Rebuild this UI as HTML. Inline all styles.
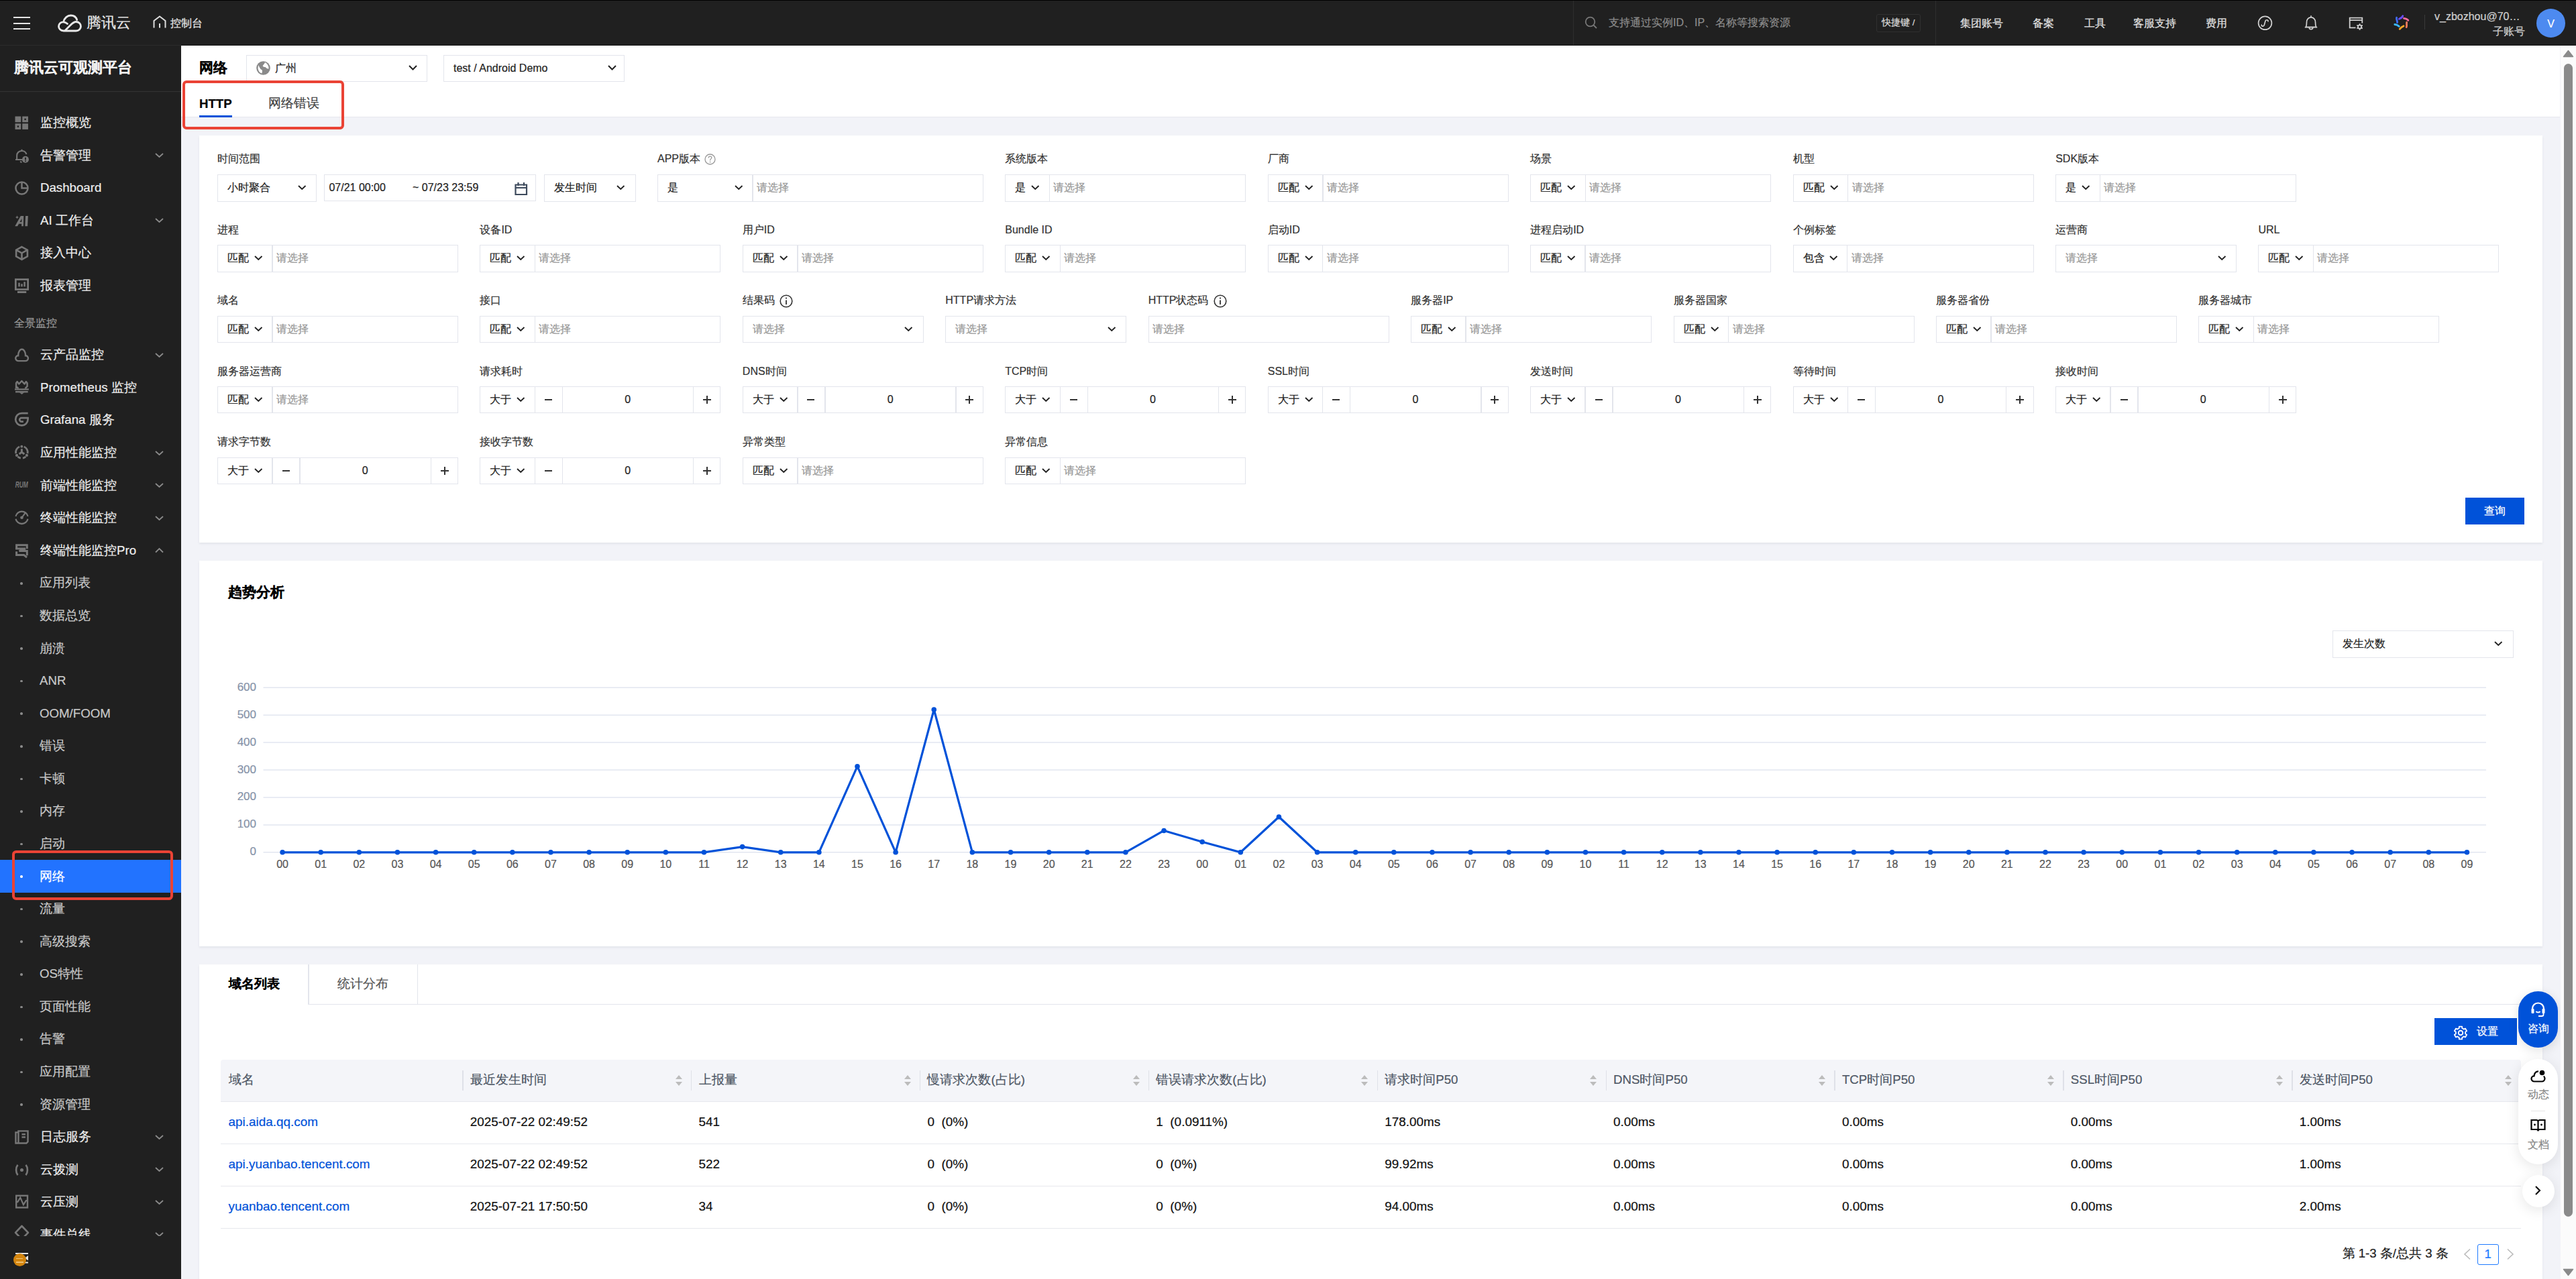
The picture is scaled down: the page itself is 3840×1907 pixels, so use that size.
<!DOCTYPE html><html><head><meta charset="utf-8"><style>
*{box-sizing:border-box;margin:0;padding:0}
html,body{width:3840px;height:1907px;overflow:hidden;background:#f2f3f8;font-family:'Liberation Sans', sans-serif;}
.a{position:absolute}
.t{position:absolute;white-space:nowrap;line-height:1;-webkit-text-stroke:0.2px currentColor}
.box{position:absolute;border:1.33px solid #e3e5ec;background:#fff}
.vl{position:absolute;width:1.33px;background:#e3e5ec}
svg{overflow:visible}
</style></head><body>

<div class="a" style="left:0;top:0;width:3840px;height:68px;background:#202020"></div>
<div class="a" style="left:270px;top:67px;width:3570px;height:1px;background:#181818"></div>
<div class="a" style="left:0;top:0;width:3840px;height:1px;background:#000"></div>
<div class="a" style="left:0;top:67px;width:270px;height:1px;background:#2b2b2b"></div>
<div class="a" style="left:20px;top:25.3px;width:25px;height:2.2px;background:#e6e6e6"></div>
<div class="a" style="left:20px;top:33.5px;width:25px;height:2.2px;background:#e6e6e6"></div>
<div class="a" style="left:20px;top:41.6px;width:25px;height:2.2px;background:#e6e6e6"></div>
<svg class="a" style="left:86px;top:21px" width="36" height="27" viewBox="0 0 36 27"><path d="M9 25 C4 25 1.5 21.5 1.5 18.3 C1.5 14.5 4.8 11.6 8.5 11.8 C10 5.8 14.5 2 19.5 2 C24 2 27.5 4.8 28.7 8.5 M8.5 11.8 C11 12 13 13 14.5 14.5 M9 25 L27.5 25 C31.5 25 34.5 22 34.5 18.3 C34.5 14.5 31.5 11.5 27.5 11.5 C23.5 11.5 21.5 14 18 17.5 L10.5 25" fill="none" stroke="#e8e8e8" stroke-width="2.8" stroke-linejoin="round" stroke-linecap="round"/></svg>
<div class="t" style="left:129px;top:24px;font-size:21.5px;color:#e8e8e8">腾讯云</div>
<svg class="a" style="left:228px;top:23px" width="20" height="20" viewBox="0 0 20 20"><path d="M1.5 18.5 V8 L10 1.5 L18.5 8 V18.5 M10 12 V18.5" fill="none" stroke="#ddd" stroke-width="2"/></svg>
<div class="t" style="left:254px;top:27px;font-size:16px;color:#e8e8e8">控制台</div>
<div class="a" style="left:2345px;top:1px;width:1px;height:66px;background:#2e2e2e"></div>
<div class="a" style="left:2885px;top:1px;width:1px;height:66px;background:#2e2e2e"></div>
<svg class="a" style="left:2362px;top:24px" width="20" height="20" viewBox="0 0 20 20"><circle cx="8.5" cy="8.5" r="6.8" fill="none" stroke="#777" stroke-width="1.8"/><path d="M13.5 13.5 L18 18" stroke="#777" stroke-width="1.8"/></svg>
<div class="t" style="left:2398px;top:26px;font-size:16px;color:#8c8c8c">支持通过实例ID、IP、名称等搜索资源</div>
<div class="a" style="left:2797px;top:21px;width:66px;height:27px;border:1px solid #303030;border-radius:3px"></div>
<div class="t" style="left:2805px;top:27px;font-size:13.5px;color:#ddd">快捷键 /</div>
<div class="t" style="left:2922px;top:27px;font-size:16px;color:#e0e0e0">集团账号</div>
<div class="t" style="left:3030px;top:27px;font-size:16px;color:#e0e0e0">备案</div>
<div class="t" style="left:3107px;top:27px;font-size:16px;color:#e0e0e0">工具</div>
<div class="t" style="left:3180px;top:27px;font-size:16px;color:#e0e0e0">客服支持</div>
<div class="t" style="left:3288px;top:27px;font-size:16px;color:#e0e0e0">费用</div>
<svg class="a" style="left:3365px;top:22.5px" width="23" height="23" viewBox="0 0 23 23"><circle cx="11.5" cy="11.3" r="9.9" fill="none" stroke="#d0d0d0" stroke-width="1.7"/><path d="M6.3 14.2 C6.3 16.8 9.6 16.8 10.3 14.3 L11.9 8.6 C12.6 6 16 6.2 16 8.7" fill="none" stroke="#d0d0d0" stroke-width="1.7" stroke-linecap="round"/></svg>
<svg class="a" style="left:3434px;top:22px" width="22" height="24" viewBox="0 0 22 24"><path d="M11 1.2 V3.6 M3.5 18.3 C4.2 16.5 4.5 14.5 4.5 11 C4.5 6.8 7.3 3.8 11 3.8 C14.7 3.8 17.5 6.8 17.5 11 C17.5 14.5 17.8 16.5 18.5 18.3 Z M1.8 18.6 H20.2 M8.3 19.5 C8.5 22.3 13.5 22.3 13.7 19.5" fill="none" stroke="#d0d0d0" stroke-width="1.7" stroke-linejoin="round"/></svg>
<svg class="a" style="left:3501px;top:24.5px" width="23" height="22" viewBox="0 0 23 22"><path d="M10.5 16.3 H1.7 V1.7 H20.3 V9.5 M1.7 5.2 H20.3" fill="none" stroke="#d0d0d0" stroke-width="1.8"/><circle cx="16.6" cy="15" r="2.6" fill="none" stroke="#d0d0d0" stroke-width="1.8"/><path d="M16.6 10.2 V12 M16.6 18 V19.8 M12.4 12.6 L14 13.5 M19.2 16.5 L20.8 17.4 M12.4 17.4 L14 16.5 M19.2 13.5 L20.8 12.6" stroke="#d0d0d0" stroke-width="1.8"/></svg>
<svg class="a" style="left:3566px;top:20px" width="26" height="26" viewBox="0 0 26 26">
<path d="M6.6 6.3 C5.8 8.5 7.8 11 7.6 13.5" fill="none" stroke="#3f6cff" stroke-width="2.8" stroke-linecap="round"/>
<path d="M10.3 8.3 C12.5 7.5 14.8 6 15.8 3.8" fill="none" stroke="#6a4cff" stroke-width="2.8" stroke-linecap="round"/>
<path d="M17.5 7.3 C19.8 7.5 22.5 8.3 23.8 10.3" fill="none" stroke="#ff6ca0" stroke-width="2.8" stroke-linecap="round"/>
<path d="M21.7 13.3 C21 15.5 22.3 18.5 21.2 20.5" fill="none" stroke="#ff7d5e" stroke-width="2.8" stroke-linecap="round"/>
<path d="M17 18.8 C14.8 19.5 12.5 21.5 11.3 23.3" fill="none" stroke="#ffa726" stroke-width="2.8" stroke-linecap="round"/>
<path d="M3.8 16.5 C6 16.5 8.5 17.8 10.3 19.3" fill="none" stroke="#3cb9ff" stroke-width="2.8" stroke-linecap="round"/>
</svg>
<div class="a" style="left:3614px;top:22px;width:1px;height:22px;background:#3a3a3a"></div>
<div class="t" style="left:3629px;top:16.5px;font-size:16px;color:#d0d0d0">v_zbozhou@70…</div>
<div class="t" style="left:3716px;top:38.5px;font-size:16px;color:#d0d0d0">子账号</div>
<div class="a" style="left:3781px;top:13px;width:43px;height:43px;border-radius:50%;background:#4d8af0"></div>
<div class="t" style="left:3781px;top:27.5px;width:43px;text-align:center;font-size:16px;color:#fff">V</div>
<div class="a" style="left:0;top:68px;width:270px;height:1839px;background:#202020"></div>
<div class="t" style="left:21px;top:91px;font-size:21.5px;font-weight:bold;color:#f0f0f0">腾讯云可观测平台</div>
<div class="a" style="left:0;top:136px;width:270px;height:1px;background:#333"></div>
<svg class="a" style="left:22px;top:173.00px" width="21" height="21" viewBox="0 0 20 20"><rect x="0.5" y="0.5" width="8.3" height="8.3" fill="#777777"/><rect x="10.7" y="0.5" width="8.3" height="8.3" fill="#777777"/><rect x="0.5" y="10.7" width="8.3" height="8.3" fill="#777777"/><rect x="10.7" y="10.7" width="8.3" height="8.3" fill="#777777"/><rect x="13.7" y="3.5" width="2.3" height="2.3" fill="#202020"/><rect x="3.5" y="13.7" width="2.3" height="2.3" fill="#202020"/></svg>
<div class="t" style="left:60px;top:174.00px;font-size:18.67px;color:#ececec">监控概览</div>
<svg class="a" style="left:22px;top:221.58px" width="21" height="21" viewBox="0 0 20 20"><path d="M10 0.8 V2.6 M3 15 V9.5 C3 5.5 6 2.8 10 2.8 C13.2 2.8 15.8 4.6 16.6 7.6 M1 15.2 H10.5 M8 17.5 C8.3 18.5 9 19 10 19" fill="none" stroke="#777777" stroke-width="2"/><circle cx="15.2" cy="15" r="4.8" fill="#777777"/><path d="M15.2 12.2 V15.6 M15.2 16.7 V18" stroke="#202020" stroke-width="1.7"/></svg>
<div class="t" style="left:60px;top:222.58px;font-size:18.67px;color:#ececec">告警管理</div>
<svg style="position:absolute;left:231px;top:228.07999999999998px" width="13" height="9" viewBox="0 0 13 9"><path d="M1 1 L6.5 6 L12 1" fill="none" stroke="#8a8a8a" stroke-width="1.8"/></svg>
<svg class="a" style="left:22px;top:270.16px" width="21" height="21" viewBox="0 0 20 20"><circle cx="10" cy="10" r="8.6" fill="none" stroke="#777777" stroke-width="2.4"/><path d="M10 1.5 V10 H18.5" fill="none" stroke="#777777" stroke-width="2.4"/></svg>
<div class="t" style="left:60px;top:271.16px;font-size:18.67px;color:#ececec">Dashboard</div>
<svg class="a" style="left:22px;top:318.74px" width="21" height="21" viewBox="0 0 20 20"><path fill-rule="evenodd" d="M0.3 17.3 L8.4 2.8 H12.6 L12.3 17.3 H9.6 L9.7 14 H5.8 L3.9 17.3 Z M7.2 11.4 H9.8 L10 6.6 Z M15.3 2.8 H18.9 L18.2 17.3 H14.6 Z" fill="#777777"/><path d="M3.3 2.2 L4 4 L5.8 4.7 L4 5.4 L3.3 7.2 L2.6 5.4 L0.8 4.7 L2.6 4 Z" fill="#777777"/></svg>
<div class="t" style="left:60px;top:319.74px;font-size:18.67px;color:#ececec">AI 工作台</div>
<svg style="position:absolute;left:231px;top:325.24px" width="13" height="9" viewBox="0 0 13 9"><path d="M1 1 L6.5 6 L12 1" fill="none" stroke="#8a8a8a" stroke-width="1.8"/></svg>
<svg class="a" style="left:22px;top:367.32px" width="21" height="21" viewBox="0 0 20 20"><path d="M10 1 L18 5.4 V14.6 L10 19 L2 14.6 V5.4 Z M2 5.4 L10 9.8 L18 5.4 M10 9.8 V19" fill="none" stroke="#777777" stroke-width="2.5" stroke-linejoin="miter"/></svg>
<div class="t" style="left:60px;top:368.32px;font-size:18.67px;color:#ececec">接入中心</div>
<svg class="a" style="left:22px;top:415.90px" width="21" height="21" viewBox="0 0 20 20"><rect x="1.3" y="0.6" width="17.4" height="14.2" fill="none" stroke="#777777" stroke-width="2.6"/><rect x="3.8" y="17.2" width="12.6" height="2.8" fill="#777777"/><rect x="5" y="5.4" width="2.4" height="5.4" fill="#777777"/><rect x="8.8" y="6.9" width="2.4" height="3.9" fill="#777777"/><rect x="12.7" y="4" width="2.4" height="6.8" fill="#777777"/></svg>
<div class="t" style="left:60px;top:416.90px;font-size:18.67px;color:#ececec">报表管理</div>
<div class="t" style="left:21px;top:472.5px;font-size:16.4px;color:#9a9a9a">全景监控</div>
<svg class="a" style="left:22px;top:519.30px" width="21" height="21" viewBox="0 0 20 20"><path d="M5.2 18.2 C2.7 18.2 1.2 16.4 1.2 14.3 C1.2 12.2 2.9 10.6 4.9 10.7 C4.6 5.8 7.3 1.7 10.1 1.7 C12.9 1.7 15.6 5.8 15.3 10.7 C17.3 10.6 19 12.2 19 14.3 C19 16.4 17.5 18.2 15 18.2 Z" fill="none" stroke="#777777" stroke-width="2.3"/></svg>
<div class="t" style="left:60px;top:520.30px;font-size:18.67px;color:#ececec">云产品监控</div>
<svg style="position:absolute;left:231px;top:525.8px" width="13" height="9" viewBox="0 0 13 9"><path d="M1 1 L6.5 6 L12 1" fill="none" stroke="#8a8a8a" stroke-width="1.8"/></svg>
<svg class="a" style="left:22px;top:567.88px" width="21" height="21" viewBox="0 0 20 20"><g transform="translate(-20.95,-4.67) scale(0.952)"><path d="M24.1 16 V8.2 L25.7 5.9 L28.3 9.4 L32.4 4.9 L36.5 9.4 L38.9 5.9 L40.6 8.2 V13 L37.5 16 M24.1 13 L27.5 16" fill="none" stroke="#777777" stroke-width="2.5" stroke-linejoin="round"/></g><rect x="0" y="10.8" width="19.9" height="2.2" fill="#777777"/><rect x="0.95" y="14.3" width="17.8" height="2.3" fill="#777777"/><path d="M6.5 16.4 H13.4 L10 19 Z" fill="#777777"/></svg>
<div class="t" style="left:60px;top:568.88px;font-size:18.67px;color:#ececec">Prometheus 监控</div>
<svg class="a" style="left:22px;top:616.46px" width="21" height="21" viewBox="0 0 20 20"><g transform="translate(-3.81,-4.25) scale(0.952)"><path d="M23.7 4.5 H14.4 A9.2 9.2 0 1 0 23.6 13.7 V11.5 H14 A2.8 2.8 0 0 0 14 17.1 H16.9" fill="none" stroke="#777777" stroke-width="2.7"/></g></svg>
<div class="t" style="left:60px;top:617.46px;font-size:18.67px;color:#ececec">Grafana 服务</div>
<svg class="a" style="left:22px;top:665.04px" width="21" height="21" viewBox="0 0 20 20"><g transform="translate(-3.81,-4.8) scale(0.952)"><path d="M17.73 6.05 A8.9 8.9 0 0 1 23.11 16.15 M20.36 20.91 A8.9 8.9 0 0 1 15.95 23.06 M12.85 23.06 A8.9 8.9 0 0 1 8.44 20.91 M5.69 16.15 A8.9 8.9 0 0 1 11.07 6.05 " fill="none" stroke="#777777" stroke-width="2.8"/><circle cx="14.3" cy="5.9" r="2" fill="#777777"/><circle cx="7" cy="19" r="2.1" fill="#777777"/><circle cx="21.9" cy="19" r="2.1" fill="#777777"/><path d="M14.4 9.2 V14.2 L10.6 17 M14.4 14.2 L18.4 17" fill="none" stroke="#777777" stroke-width="3" stroke-linejoin="round"/></g></svg>
<div class="t" style="left:60px;top:666.04px;font-size:18.67px;color:#ececec">应用性能监控</div>
<svg style="position:absolute;left:231px;top:671.54px" width="13" height="9" viewBox="0 0 13 9"><path d="M1 1 L6.5 6 L12 1" fill="none" stroke="#8a8a8a" stroke-width="1.8"/></svg>
<svg class="a" style="left:22px;top:713.62px" width="21" height="21" viewBox="0 0 20 20"><text x="0.7" y="12.6" font-size="12.5" font-weight="bold" font-style="italic" fill="#777777" font-family="Liberation Sans" textLength="18.2" lengthAdjust="spacingAndGlyphs">RUM</text></svg>
<div class="t" style="left:60px;top:714.62px;font-size:18.67px;color:#ececec">前端性能监控</div>
<svg style="position:absolute;left:231px;top:720.1199999999999px" width="13" height="9" viewBox="0 0 13 9"><path d="M1 1 L6.5 6 L12 1" fill="none" stroke="#8a8a8a" stroke-width="1.8"/></svg>
<svg class="a" style="left:22px;top:762.20px" width="21" height="21" viewBox="0 0 20 20"><path d="M1.43 7.51 A8.76 8.76 0 0 1 18.57 7.51 M18.57 11.15 A8.76 8.76 0 0 1 1.43 11.15" fill="none" stroke="#777777" stroke-width="2.2"/><path d="M10 9.33 L15 2.6" stroke="#777777" stroke-width="2"/><circle cx="10" cy="9.33" r="2.2" fill="#777777"/></svg>
<div class="t" style="left:60px;top:763.20px;font-size:18.67px;color:#ececec">终端性能监控</div>
<svg style="position:absolute;left:231px;top:768.6999999999999px" width="13" height="9" viewBox="0 0 13 9"><path d="M1 1 L6.5 6 L12 1" fill="none" stroke="#8a8a8a" stroke-width="1.8"/></svg>
<svg class="a" style="left:22px;top:810.78px" width="21" height="21" viewBox="0 0 20 20"><g transform="translate(-3.81,-4.55) scale(0.952)"><path d="M6.6 12.5 V6.6 H22.3 V12 M5 11.8 H20 L10.5 15.4 H22.3 V22 M6.6 16 V21.2 H17.6 L22 25" fill="none" stroke="#777777" stroke-width="3" stroke-linejoin="miter"/></g></svg>
<div class="t" style="left:60px;top:811.78px;font-size:18.67px;color:#ececec">终端性能监控Pro</div>
<svg style="position:absolute;left:231px;top:816.28px" width="13" height="9" viewBox="0 0 13 9"><path d="M1 7.5 L6.5 2 L12 7.5" fill="none" stroke="#8a8a8a" stroke-width="1.8"/></svg>
<div class="a" style="left:0;top:1282.08px;width:270px;height:48.8px;background:#2273ff"></div>
<div class="a" style="left:30px;top:868.06px;width:3.6px;height:3.6px;border-radius:50%;background:#8a8a8a"></div>
<div class="t" style="left:59px;top:860.36px;font-size:18.67px;color:#c8c8c8">应用列表</div>
<div class="a" style="left:30px;top:916.64px;width:3.6px;height:3.6px;border-radius:50%;background:#8a8a8a"></div>
<div class="t" style="left:59px;top:908.94px;font-size:18.67px;color:#c8c8c8">数据总览</div>
<div class="a" style="left:30px;top:965.22px;width:3.6px;height:3.6px;border-radius:50%;background:#8a8a8a"></div>
<div class="t" style="left:59px;top:957.52px;font-size:18.67px;color:#c8c8c8">崩溃</div>
<div class="a" style="left:30px;top:1013.80px;width:3.6px;height:3.6px;border-radius:50%;background:#8a8a8a"></div>
<div class="t" style="left:59px;top:1006.10px;font-size:18.67px;color:#c8c8c8">ANR</div>
<div class="a" style="left:30px;top:1062.38px;width:3.6px;height:3.6px;border-radius:50%;background:#8a8a8a"></div>
<div class="t" style="left:59px;top:1054.68px;font-size:18.67px;color:#c8c8c8">OOM/FOOM</div>
<div class="a" style="left:30px;top:1110.96px;width:3.6px;height:3.6px;border-radius:50%;background:#8a8a8a"></div>
<div class="t" style="left:59px;top:1103.26px;font-size:18.67px;color:#c8c8c8">错误</div>
<div class="a" style="left:30px;top:1159.54px;width:3.6px;height:3.6px;border-radius:50%;background:#8a8a8a"></div>
<div class="t" style="left:59px;top:1151.84px;font-size:18.67px;color:#c8c8c8">卡顿</div>
<div class="a" style="left:30px;top:1208.12px;width:3.6px;height:3.6px;border-radius:50%;background:#8a8a8a"></div>
<div class="t" style="left:59px;top:1200.42px;font-size:18.67px;color:#c8c8c8">内存</div>
<div class="a" style="left:30px;top:1256.70px;width:3.6px;height:3.6px;border-radius:50%;background:#8a8a8a"></div>
<div class="t" style="left:59px;top:1249.00px;font-size:18.67px;color:#c8c8c8">启动</div>
<div class="a" style="left:30px;top:1305.28px;width:3.6px;height:3.6px;border-radius:50%;background:#fff"></div>
<div class="t" style="left:59px;top:1297.58px;font-size:18.67px;color:#fff">网络</div>
<div class="a" style="left:30px;top:1353.86px;width:3.6px;height:3.6px;border-radius:50%;background:#8a8a8a"></div>
<div class="t" style="left:59px;top:1346.16px;font-size:18.67px;color:#c8c8c8">流量</div>
<div class="a" style="left:30px;top:1402.44px;width:3.6px;height:3.6px;border-radius:50%;background:#8a8a8a"></div>
<div class="t" style="left:59px;top:1394.74px;font-size:18.67px;color:#c8c8c8">高级搜索</div>
<div class="a" style="left:30px;top:1451.02px;width:3.6px;height:3.6px;border-radius:50%;background:#8a8a8a"></div>
<div class="t" style="left:59px;top:1443.32px;font-size:18.67px;color:#c8c8c8">OS特性</div>
<div class="a" style="left:30px;top:1499.60px;width:3.6px;height:3.6px;border-radius:50%;background:#8a8a8a"></div>
<div class="t" style="left:59px;top:1491.90px;font-size:18.67px;color:#c8c8c8">页面性能</div>
<div class="a" style="left:30px;top:1548.18px;width:3.6px;height:3.6px;border-radius:50%;background:#8a8a8a"></div>
<div class="t" style="left:59px;top:1540.48px;font-size:18.67px;color:#c8c8c8">告警</div>
<div class="a" style="left:30px;top:1596.76px;width:3.6px;height:3.6px;border-radius:50%;background:#8a8a8a"></div>
<div class="t" style="left:59px;top:1589.06px;font-size:18.67px;color:#c8c8c8">应用配置</div>
<div class="a" style="left:30px;top:1645.34px;width:3.6px;height:3.6px;border-radius:50%;background:#8a8a8a"></div>
<div class="t" style="left:59px;top:1637.64px;font-size:18.67px;color:#c8c8c8">资源管理</div>
<svg class="a" style="left:22px;top:1685.22px" width="21" height="21" viewBox="0 0 20 20"><path d="M5.2 3.2 V1.3 H18.6 V16.5 L16.6 18.6 H1.4 V3.2 Z M5.2 3.2 V18.6 M10 6 H15.2 M10 10 H15.2" fill="none" stroke="#777777" stroke-width="2.3"/></svg>
<div class="t" style="left:60px;top:1686.22px;font-size:18.67px;color:#ececec">日志服务</div>
<svg style="position:absolute;left:231px;top:1691.72px" width="13" height="9" viewBox="0 0 13 9"><path d="M1 1 L6.5 6 L12 1" fill="none" stroke="#8a8a8a" stroke-width="1.8"/></svg>
<svg class="a" style="left:22px;top:1733.80px" width="21" height="21" viewBox="0 0 20 20"><path d="M4.3 2.8 C1.2 6.5 1.2 13.5 4.3 17.2 M15.7 2.8 C18.8 6.5 18.8 13.5 15.7 17.2" fill="none" stroke="#777777" stroke-width="2.5"/><circle cx="10" cy="10" r="2.4" fill="#777777"/></svg>
<div class="t" style="left:60px;top:1734.80px;font-size:18.67px;color:#ececec">云拨测</div>
<svg style="position:absolute;left:231px;top:1740.3px" width="13" height="9" viewBox="0 0 13 9"><path d="M1 1 L6.5 6 L12 1" fill="none" stroke="#8a8a8a" stroke-width="1.8"/></svg>
<svg class="a" style="left:22px;top:1782.38px" width="21" height="21" viewBox="0 0 20 20"><rect x="2.1" y="0.7" width="16" height="16.9" fill="none" stroke="#777777" stroke-width="2.3"/><path d="M2 9.7 H4.1 L7.9 3.4 L12.3 13.5 L16.1 7.8 H18.5" fill="none" stroke="#777777" stroke-width="2.1" stroke-linejoin="miter"/></svg>
<div class="t" style="left:60px;top:1783.38px;font-size:18.67px;color:#ececec">云压测</div>
<svg style="position:absolute;left:231px;top:1788.8799999999999px" width="13" height="9" viewBox="0 0 13 9"><path d="M1 1 L6.5 6 L12 1" fill="none" stroke="#8a8a8a" stroke-width="1.8"/></svg>
<svg class="a" style="left:22px;top:1830.96px" width="21" height="21" viewBox="0 0 20 20"><path d="M10 -2.8 L19 6.6 L10 16 L1 6.6 Z" fill="none" stroke="#777777" stroke-width="2.6" stroke-linejoin="round"/></svg>
<div class="t" style="left:60px;top:1831.96px;font-size:18.67px;color:#ececec">事件总线</div>
<svg style="position:absolute;left:231px;top:1837.4599999999998px" width="13" height="9" viewBox="0 0 13 9"><path d="M1 1 L6.5 6 L12 1" fill="none" stroke="#8a8a8a" stroke-width="1.8"/></svg>
<div class="a" style="left:0;top:1843px;width:270px;height:64px;background:#202020"></div>
<svg class="a" style="left:22px;top:1867px" width="21" height="18" viewBox="0 0 21 18"><path d="M1 2 H20 M1 15.5 H20" stroke="#e6e6e6" stroke-width="2"/><path d="M20 5 L15 8.7 L20 12.4 Z" fill="#e6e6e6"/></svg>
<div class="a" style="left:19.8px;top:1868.8px;width:19.2px;height:19.2px;border-radius:50%;background:#d3850f"></div>
<div class="a" style="left:24px;top:1875.5px;width:10px;height:1.5px;background:#f0c070"></div>
<div class="a" style="left:24px;top:1881px;width:11px;height:1.5px;background:#f0c070"></div>
<div class="a" style="left:270px;top:68px;width:3546px;height:106px;background:#fff"></div>
<div class="a" style="left:270px;top:173.5px;width:3546px;height:1.33px;background:#e7e8ee"></div>
<div class="t" style="left:297px;top:91px;font-size:21.33px;font-weight:bold;color:#000">网络</div>
<div class="box" style="left:367px;top:82px;width:270px;height:40px"></div>
<svg class="a" style="left:382px;top:91px" width="21" height="21" viewBox="0 0 21 21"><circle cx="10.5" cy="10.5" r="10.3" fill="#8a8a8a"/><path d="M3 6 C5 9 5.5 12 8 13 C9.5 13.5 9 16 8.3 18.5 C5 17.5 3.2 15 2.5 11 Z M13 2 C12.5 4 11 5 10 6.5 C9 8 11.5 9.5 13.5 9 C15.5 10.5 16 12 18.5 11.5 C19 8 17 4 13 2 Z" fill="#fff"/></svg>
<div class="t" style="left:410px;top:94px;font-size:16px;color:#222">广州</div>
<svg style="position:absolute;left:608.5px;top:97px" width="13" height="9.5" viewBox="0 0 13 9.5"><path d="M1 1 L6.5 6.5 L12 1" fill="none" stroke="#222" stroke-width="2"/></svg>
<div class="box" style="left:661px;top:82px;width:270px;height:40px"></div>
<div class="t" style="left:676px;top:94px;font-size:16px;color:#222">test / Android Demo</div>
<svg style="position:absolute;left:905.5px;top:97px" width="13" height="9.5" viewBox="0 0 13 9.5"><path d="M1 1 L6.5 6.5 L12 1" fill="none" stroke="#222" stroke-width="2"/></svg>
<div class="t" style="left:297px;top:145.5px;font-size:18.67px;font-weight:bold;color:#000">HTTP</div>
<div class="a" style="left:297px;top:172px;width:49px;height:2.5px;background:#0052d9"></div>
<div class="t" style="left:400px;top:145px;font-size:18.67px;color:#444">网络错误</div>
<div class="a" style="left:297px;top:202px;width:3493px;height:607px;background:#fff;box-shadow:0 2px 3px rgba(54,58,80,0.08)"></div>
<div class="t" style="left:324.00px;top:229.40px;font-size:16px;color:#333">时间范围</div>
<div class="box" style="left:324.00px;top:260.00px;width:148.00px;height:41px"></div>
<div class="t" style="left:339.00px;top:271.80px;font-size:16px;color:#222">小时聚合</div>
<svg style="position:absolute;left:443.5px;top:275.5px" width="12.5" height="9" viewBox="0 0 12.5 9"><path d="M1 1 L6.25 6 L11.5 1" fill="none" stroke="#222" stroke-width="1.9"/></svg>
<div class="box" style="left:483.30px;top:260.00px;width:316.00px;height:40px"></div>
<div class="t" style="left:490.40px;top:271.80px;font-size:16px;color:#222">07/21 00:00</div>
<div class="t" style="left:615.00px;top:271.80px;font-size:16px;color:#222">~ 07/23 23:59</div>
<svg class="a" style="left:767px;top:271.00px" width="20" height="20" viewBox="0 0 20 20"><path d="M1.5 4.5 H18 V19 H1.5 Z M1.5 9 H18 M5.5 1 V6 M14 1 V6" fill="none" stroke="#3d4a5c" stroke-width="2.2"/></svg>
<div class="box" style="left:810.50px;top:260.00px;width:137.00px;height:41px"></div>
<div class="t" style="left:825.50px;top:271.80px;font-size:16px;color:#222">发生时间</div>
<svg style="position:absolute;left:919.0px;top:275.5px" width="12.5" height="9" viewBox="0 0 12.5 9"><path d="M1 1 L6.25 6 L11.5 1" fill="none" stroke="#222" stroke-width="1.9"/></svg>
<div class="t" style="left:980.03px;top:229.40px;font-size:16px;color:#333">APP版本</div>
<svg class="a" style="left:1050.03px;top:229.00px" width="17" height="17" viewBox="0 0 17 17"><circle cx="8.5" cy="8.5" r="7.5" fill="none" stroke="#999" stroke-width="1.3"/><path d="M6.2 6.5 C6.2 5 7.2 4.2 8.5 4.2 C9.8 4.2 10.8 5 10.8 6.3 C10.8 7.8 8.6 8 8.6 9.8 V10.5" fill="none" stroke="#999" stroke-width="1.3"/><circle cx="8.6" cy="12.6" r="0.9" fill="#999"/></svg>
<div class="box" style="left:980.03px;top:260.00px;width:486.00px;height:41px"></div>
<div class="vl" style="left:1121.37px;top:260.00px;height:41px"></div>
<div class="t" style="left:995.03px;top:271.80px;font-size:16px;color:#222">是</div>
<svg style="position:absolute;left:1095.03px;top:275.5px" width="12.5" height="9" viewBox="0 0 12.5 9"><path d="M1 1 L6.25 6 L11.5 1" fill="none" stroke="#222" stroke-width="1.9"/></svg>
<div class="t" style="left:1128.03px;top:271.80px;font-size:16px;color:#999">请选择</div>
<div class="t" style="left:1498.46px;top:229.40px;font-size:16px;color:#333">系统版本</div>
<div class="box" style="left:1498.46px;top:260.00px;width:359.00px;height:41px"></div>
<div class="vl" style="left:1563.80px;top:260.00px;height:41px"></div>
<div class="t" style="left:1513.46px;top:271.80px;font-size:16px;color:#222">是</div>
<svg style="position:absolute;left:1537.46px;top:275.5px" width="12.5" height="9" viewBox="0 0 12.5 9"><path d="M1 1 L6.25 6 L11.5 1" fill="none" stroke="#222" stroke-width="1.9"/></svg>
<div class="t" style="left:1570.46px;top:271.80px;font-size:16px;color:#999">请选择</div>
<div class="t" style="left:1889.89px;top:229.40px;font-size:16px;color:#333">厂商</div>
<div class="box" style="left:1889.89px;top:260.00px;width:359.00px;height:41px"></div>
<div class="vl" style="left:1971.23px;top:260.00px;height:41px"></div>
<div class="t" style="left:1904.89px;top:271.80px;font-size:16px;color:#222">匹配</div>
<svg style="position:absolute;left:1944.89px;top:275.5px" width="12.5" height="9" viewBox="0 0 12.5 9"><path d="M1 1 L6.25 6 L11.5 1" fill="none" stroke="#222" stroke-width="1.9"/></svg>
<div class="t" style="left:1977.89px;top:271.80px;font-size:16px;color:#999">请选择</div>
<div class="t" style="left:2281.32px;top:229.40px;font-size:16px;color:#333">场景</div>
<div class="box" style="left:2281.32px;top:260.00px;width:359.00px;height:41px"></div>
<div class="vl" style="left:2362.66px;top:260.00px;height:41px"></div>
<div class="t" style="left:2296.32px;top:271.80px;font-size:16px;color:#222">匹配</div>
<svg style="position:absolute;left:2336.32px;top:275.5px" width="12.5" height="9" viewBox="0 0 12.5 9"><path d="M1 1 L6.25 6 L11.5 1" fill="none" stroke="#222" stroke-width="1.9"/></svg>
<div class="t" style="left:2369.32px;top:271.80px;font-size:16px;color:#999">请选择</div>
<div class="t" style="left:2672.75px;top:229.40px;font-size:16px;color:#333">机型</div>
<div class="box" style="left:2672.75px;top:260.00px;width:359.00px;height:41px"></div>
<div class="vl" style="left:2754.09px;top:260.00px;height:41px"></div>
<div class="t" style="left:2687.75px;top:271.80px;font-size:16px;color:#222">匹配</div>
<svg style="position:absolute;left:2727.75px;top:275.5px" width="12.5" height="9" viewBox="0 0 12.5 9"><path d="M1 1 L6.25 6 L11.5 1" fill="none" stroke="#222" stroke-width="1.9"/></svg>
<div class="t" style="left:2760.75px;top:271.80px;font-size:16px;color:#999">请选择</div>
<div class="t" style="left:3064.18px;top:229.40px;font-size:16px;color:#333">SDK版本</div>
<div class="box" style="left:3064.18px;top:260.00px;width:359.00px;height:41px"></div>
<div class="vl" style="left:3129.52px;top:260.00px;height:41px"></div>
<div class="t" style="left:3079.18px;top:271.80px;font-size:16px;color:#222">是</div>
<svg style="position:absolute;left:3103.1800000000003px;top:275.5px" width="12.5" height="9" viewBox="0 0 12.5 9"><path d="M1 1 L6.25 6 L11.5 1" fill="none" stroke="#222" stroke-width="1.9"/></svg>
<div class="t" style="left:3136.18px;top:271.80px;font-size:16px;color:#999">请选择</div>
<div class="t" style="left:324.00px;top:335.00px;font-size:16px;color:#333">进程</div>
<div class="box" style="left:324.00px;top:365.00px;width:359.00px;height:41px"></div>
<div class="vl" style="left:405.34px;top:365.00px;height:41px"></div>
<div class="t" style="left:339.00px;top:377.40px;font-size:16px;color:#222">匹配</div>
<svg style="position:absolute;left:379.0px;top:380.5px" width="12.5" height="9" viewBox="0 0 12.5 9"><path d="M1 1 L6.25 6 L11.5 1" fill="none" stroke="#222" stroke-width="1.9"/></svg>
<div class="t" style="left:412.00px;top:377.40px;font-size:16px;color:#999">请选择</div>
<div class="t" style="left:715.43px;top:335.00px;font-size:16px;color:#333">设备ID</div>
<div class="box" style="left:715.43px;top:365.00px;width:359.00px;height:41px"></div>
<div class="vl" style="left:796.77px;top:365.00px;height:41px"></div>
<div class="t" style="left:730.43px;top:377.40px;font-size:16px;color:#222">匹配</div>
<svg style="position:absolute;left:770.4300000000001px;top:380.5px" width="12.5" height="9" viewBox="0 0 12.5 9"><path d="M1 1 L6.25 6 L11.5 1" fill="none" stroke="#222" stroke-width="1.9"/></svg>
<div class="t" style="left:803.43px;top:377.40px;font-size:16px;color:#999">请选择</div>
<div class="t" style="left:1106.86px;top:335.00px;font-size:16px;color:#333">用户ID</div>
<div class="box" style="left:1106.86px;top:365.00px;width:359.00px;height:41px"></div>
<div class="vl" style="left:1188.20px;top:365.00px;height:41px"></div>
<div class="t" style="left:1121.86px;top:377.40px;font-size:16px;color:#222">匹配</div>
<svg style="position:absolute;left:1161.8600000000001px;top:380.5px" width="12.5" height="9" viewBox="0 0 12.5 9"><path d="M1 1 L6.25 6 L11.5 1" fill="none" stroke="#222" stroke-width="1.9"/></svg>
<div class="t" style="left:1194.86px;top:377.40px;font-size:16px;color:#999">请选择</div>
<div class="t" style="left:1498.29px;top:335.00px;font-size:16px;color:#333">Bundle ID</div>
<div class="box" style="left:1498.29px;top:365.00px;width:359.00px;height:41px"></div>
<div class="vl" style="left:1579.63px;top:365.00px;height:41px"></div>
<div class="t" style="left:1513.29px;top:377.40px;font-size:16px;color:#222">匹配</div>
<svg style="position:absolute;left:1553.29px;top:380.5px" width="12.5" height="9" viewBox="0 0 12.5 9"><path d="M1 1 L6.25 6 L11.5 1" fill="none" stroke="#222" stroke-width="1.9"/></svg>
<div class="t" style="left:1586.29px;top:377.40px;font-size:16px;color:#999">请选择</div>
<div class="t" style="left:1889.72px;top:335.00px;font-size:16px;color:#333">启动ID</div>
<div class="box" style="left:1889.72px;top:365.00px;width:359.00px;height:41px"></div>
<div class="vl" style="left:1971.06px;top:365.00px;height:41px"></div>
<div class="t" style="left:1904.72px;top:377.40px;font-size:16px;color:#222">匹配</div>
<svg style="position:absolute;left:1944.72px;top:380.5px" width="12.5" height="9" viewBox="0 0 12.5 9"><path d="M1 1 L6.25 6 L11.5 1" fill="none" stroke="#222" stroke-width="1.9"/></svg>
<div class="t" style="left:1977.72px;top:377.40px;font-size:16px;color:#999">请选择</div>
<div class="t" style="left:2281.15px;top:335.00px;font-size:16px;color:#333">进程启动ID</div>
<div class="box" style="left:2281.15px;top:365.00px;width:359.00px;height:41px"></div>
<div class="vl" style="left:2362.49px;top:365.00px;height:41px"></div>
<div class="t" style="left:2296.15px;top:377.40px;font-size:16px;color:#222">匹配</div>
<svg style="position:absolute;left:2336.15px;top:380.5px" width="12.5" height="9" viewBox="0 0 12.5 9"><path d="M1 1 L6.25 6 L11.5 1" fill="none" stroke="#222" stroke-width="1.9"/></svg>
<div class="t" style="left:2369.15px;top:377.40px;font-size:16px;color:#999">请选择</div>
<div class="t" style="left:2672.58px;top:335.00px;font-size:16px;color:#333">个例标签</div>
<div class="box" style="left:2672.58px;top:365.00px;width:359.00px;height:41px"></div>
<div class="vl" style="left:2752.92px;top:365.00px;height:41px"></div>
<div class="t" style="left:2687.58px;top:377.40px;font-size:16px;color:#222">包含</div>
<svg style="position:absolute;left:2726.58px;top:380.5px" width="12.5" height="9" viewBox="0 0 12.5 9"><path d="M1 1 L6.25 6 L11.5 1" fill="none" stroke="#222" stroke-width="1.9"/></svg>
<div class="t" style="left:2759.58px;top:377.40px;font-size:16px;color:#999">请选择</div>
<div class="t" style="left:3064.01px;top:335.00px;font-size:16px;color:#333">运营商</div>
<div class="box" style="left:3064.01px;top:365.00px;width:270.00px;height:41px"></div>
<div class="t" style="left:3079.01px;top:377.40px;font-size:16px;color:#999">请选择</div>
<svg style="position:absolute;left:3305.51px;top:380.5px" width="12.5" height="9" viewBox="0 0 12.5 9"><path d="M1 1 L6.25 6 L11.5 1" fill="none" stroke="#222" stroke-width="1.9"/></svg>
<div class="t" style="left:3366.44px;top:335.00px;font-size:16px;color:#333">URL</div>
<div class="box" style="left:3366.44px;top:365.00px;width:359.00px;height:41px"></div>
<div class="vl" style="left:3447.78px;top:365.00px;height:41px"></div>
<div class="t" style="left:3381.44px;top:377.40px;font-size:16px;color:#222">匹配</div>
<svg style="position:absolute;left:3421.44px;top:380.5px" width="12.5" height="9" viewBox="0 0 12.5 9"><path d="M1 1 L6.25 6 L11.5 1" fill="none" stroke="#222" stroke-width="1.9"/></svg>
<div class="t" style="left:3454.44px;top:377.40px;font-size:16px;color:#999">请选择</div>
<div class="t" style="left:324.00px;top:440.40px;font-size:16px;color:#333">域名</div>
<div class="box" style="left:324.00px;top:471.00px;width:359.00px;height:40px"></div>
<div class="vl" style="left:405.34px;top:471.00px;height:40px"></div>
<div class="t" style="left:339.00px;top:482.80px;font-size:16px;color:#222">匹配</div>
<svg style="position:absolute;left:379.0px;top:486.5px" width="12.5" height="9" viewBox="0 0 12.5 9"><path d="M1 1 L6.25 6 L11.5 1" fill="none" stroke="#222" stroke-width="1.9"/></svg>
<div class="t" style="left:412.00px;top:482.80px;font-size:16px;color:#999">请选择</div>
<div class="t" style="left:715.43px;top:440.40px;font-size:16px;color:#333">接口</div>
<div class="box" style="left:715.43px;top:471.00px;width:359.00px;height:40px"></div>
<div class="vl" style="left:796.77px;top:471.00px;height:40px"></div>
<div class="t" style="left:730.43px;top:482.80px;font-size:16px;color:#222">匹配</div>
<svg style="position:absolute;left:770.4300000000001px;top:486.5px" width="12.5" height="9" viewBox="0 0 12.5 9"><path d="M1 1 L6.25 6 L11.5 1" fill="none" stroke="#222" stroke-width="1.9"/></svg>
<div class="t" style="left:803.43px;top:482.80px;font-size:16px;color:#999">请选择</div>
<div class="t" style="left:1106.86px;top:440.40px;font-size:16px;color:#333">结果码</div>
<svg class="a" style="left:1162.36px;top:438.50px" width="20" height="20" viewBox="0 0 20 20"><circle cx="10" cy="10" r="8.8" fill="none" stroke="#333" stroke-width="1.6"/><path d="M10 8.5 V15" stroke="#333" stroke-width="1.8"/><circle cx="10" cy="5.6" r="1.1" fill="#333"/></svg>
<div class="box" style="left:1106.86px;top:471.00px;width:270.00px;height:40px"></div>
<div class="t" style="left:1121.86px;top:482.80px;font-size:16px;color:#999">请选择</div>
<svg style="position:absolute;left:1348.3600000000001px;top:486.5px" width="12.5" height="9" viewBox="0 0 12.5 9"><path d="M1 1 L6.25 6 L11.5 1" fill="none" stroke="#222" stroke-width="1.9"/></svg>
<div class="t" style="left:1409.29px;top:440.40px;font-size:16px;color:#333">HTTP请求方法</div>
<div class="box" style="left:1409.29px;top:471.00px;width:270.00px;height:40px"></div>
<div class="t" style="left:1424.29px;top:482.80px;font-size:16px;color:#999">请选择</div>
<svg style="position:absolute;left:1650.7900000000002px;top:486.5px" width="12.5" height="9" viewBox="0 0 12.5 9"><path d="M1 1 L6.25 6 L11.5 1" fill="none" stroke="#222" stroke-width="1.9"/></svg>
<div class="t" style="left:1711.72px;top:440.40px;font-size:16px;color:#333">HTTP状态码</div>
<svg class="a" style="left:1809.22px;top:438.50px" width="20" height="20" viewBox="0 0 20 20"><circle cx="10" cy="10" r="8.8" fill="none" stroke="#333" stroke-width="1.6"/><path d="M10 8.5 V15" stroke="#333" stroke-width="1.8"/><circle cx="10" cy="5.6" r="1.1" fill="#333"/></svg>
<div class="box" style="left:1711.72px;top:471.00px;width:359.00px;height:40px"></div>
<div class="t" style="left:1717.72px;top:482.80px;font-size:16px;color:#999">请选择</div>
<div class="t" style="left:2103.15px;top:440.40px;font-size:16px;color:#333">服务器IP</div>
<div class="box" style="left:2103.15px;top:471.00px;width:359.00px;height:40px"></div>
<div class="vl" style="left:2184.49px;top:471.00px;height:40px"></div>
<div class="t" style="left:2118.15px;top:482.80px;font-size:16px;color:#222">匹配</div>
<svg style="position:absolute;left:2158.15px;top:486.5px" width="12.5" height="9" viewBox="0 0 12.5 9"><path d="M1 1 L6.25 6 L11.5 1" fill="none" stroke="#222" stroke-width="1.9"/></svg>
<div class="t" style="left:2191.15px;top:482.80px;font-size:16px;color:#999">请选择</div>
<div class="t" style="left:2494.58px;top:440.40px;font-size:16px;color:#333">服务器国家</div>
<div class="box" style="left:2494.58px;top:471.00px;width:359.00px;height:40px"></div>
<div class="vl" style="left:2575.92px;top:471.00px;height:40px"></div>
<div class="t" style="left:2509.58px;top:482.80px;font-size:16px;color:#222">匹配</div>
<svg style="position:absolute;left:2549.58px;top:486.5px" width="12.5" height="9" viewBox="0 0 12.5 9"><path d="M1 1 L6.25 6 L11.5 1" fill="none" stroke="#222" stroke-width="1.9"/></svg>
<div class="t" style="left:2582.58px;top:482.80px;font-size:16px;color:#999">请选择</div>
<div class="t" style="left:2886.01px;top:440.40px;font-size:16px;color:#333">服务器省份</div>
<div class="box" style="left:2886.01px;top:471.00px;width:359.00px;height:40px"></div>
<div class="vl" style="left:2967.35px;top:471.00px;height:40px"></div>
<div class="t" style="left:2901.01px;top:482.80px;font-size:16px;color:#222">匹配</div>
<svg style="position:absolute;left:2941.0099999999998px;top:486.5px" width="12.5" height="9" viewBox="0 0 12.5 9"><path d="M1 1 L6.25 6 L11.5 1" fill="none" stroke="#222" stroke-width="1.9"/></svg>
<div class="t" style="left:2974.01px;top:482.80px;font-size:16px;color:#999">请选择</div>
<div class="t" style="left:3277.44px;top:440.40px;font-size:16px;color:#333">服务器城市</div>
<div class="box" style="left:3277.44px;top:471.00px;width:359.00px;height:40px"></div>
<div class="vl" style="left:3358.78px;top:471.00px;height:40px"></div>
<div class="t" style="left:3292.44px;top:482.80px;font-size:16px;color:#222">匹配</div>
<svg style="position:absolute;left:3332.4399999999996px;top:486.5px" width="12.5" height="9" viewBox="0 0 12.5 9"><path d="M1 1 L6.25 6 L11.5 1" fill="none" stroke="#222" stroke-width="1.9"/></svg>
<div class="t" style="left:3365.44px;top:482.80px;font-size:16px;color:#999">请选择</div>
<div class="t" style="left:324.00px;top:545.70px;font-size:16px;color:#333">服务器运营商</div>
<div class="box" style="left:324.00px;top:576.00px;width:359.00px;height:40px"></div>
<div class="vl" style="left:405.34px;top:576.00px;height:40px"></div>
<div class="t" style="left:339.00px;top:588.10px;font-size:16px;color:#222">匹配</div>
<svg style="position:absolute;left:379.0px;top:591.5px" width="12.5" height="9" viewBox="0 0 12.5 9"><path d="M1 1 L6.25 6 L11.5 1" fill="none" stroke="#222" stroke-width="1.9"/></svg>
<div class="t" style="left:412.00px;top:588.10px;font-size:16px;color:#999">请选择</div>
<div class="t" style="left:715.43px;top:545.70px;font-size:16px;color:#333">请求耗时</div>
<div class="box" style="left:715.43px;top:576.00px;width:359.05px;height:40px"></div>
<div class="vl" style="left:796.77px;top:576.00px;height:40px"></div>
<div class="vl" style="left:837.77px;top:576.00px;height:40px"></div>
<div class="vl" style="left:1032.98px;top:576.00px;height:40px"></div>
<div class="t" style="left:730.43px;top:588.10px;font-size:16px;color:#222">大于</div>
<svg style="position:absolute;left:770.4300000000001px;top:591.5px" width="12.5" height="9" viewBox="0 0 12.5 9"><path d="M1 1 L6.25 6 L11.5 1" fill="none" stroke="#222" stroke-width="1.9"/></svg>
<div class="a" style="left:811.93px;top:595.00px;width:11px;height:2px;background:#333"></div>
<div class="t" style="left:838.43px;top:588.00px;width:194.55px;text-align:center;font-size:16px;color:#222">0</div>
<div class="a" style="left:1047.98px;top:595.00px;width:12px;height:2px;background:#333"></div>
<div class="a" style="left:1052.98px;top:590.00px;width:2px;height:12px;background:#333"></div>
<div class="t" style="left:1106.86px;top:545.70px;font-size:16px;color:#333">DNS时间</div>
<div class="box" style="left:1106.86px;top:576.00px;width:359.05px;height:40px"></div>
<div class="vl" style="left:1188.20px;top:576.00px;height:40px"></div>
<div class="vl" style="left:1229.20px;top:576.00px;height:40px"></div>
<div class="vl" style="left:1424.41px;top:576.00px;height:40px"></div>
<div class="t" style="left:1121.86px;top:588.10px;font-size:16px;color:#222">大于</div>
<svg style="position:absolute;left:1161.8600000000001px;top:591.5px" width="12.5" height="9" viewBox="0 0 12.5 9"><path d="M1 1 L6.25 6 L11.5 1" fill="none" stroke="#222" stroke-width="1.9"/></svg>
<div class="a" style="left:1203.36px;top:595.00px;width:11px;height:2px;background:#333"></div>
<div class="t" style="left:1229.86px;top:588.00px;width:194.55px;text-align:center;font-size:16px;color:#222">0</div>
<div class="a" style="left:1439.41px;top:595.00px;width:12px;height:2px;background:#333"></div>
<div class="a" style="left:1444.41px;top:590.00px;width:2px;height:12px;background:#333"></div>
<div class="t" style="left:1498.29px;top:545.70px;font-size:16px;color:#333">TCP时间</div>
<div class="box" style="left:1498.29px;top:576.00px;width:359.05px;height:40px"></div>
<div class="vl" style="left:1579.63px;top:576.00px;height:40px"></div>
<div class="vl" style="left:1620.63px;top:576.00px;height:40px"></div>
<div class="vl" style="left:1815.84px;top:576.00px;height:40px"></div>
<div class="t" style="left:1513.29px;top:588.10px;font-size:16px;color:#222">大于</div>
<svg style="position:absolute;left:1553.29px;top:591.5px" width="12.5" height="9" viewBox="0 0 12.5 9"><path d="M1 1 L6.25 6 L11.5 1" fill="none" stroke="#222" stroke-width="1.9"/></svg>
<div class="a" style="left:1594.79px;top:595.00px;width:11px;height:2px;background:#333"></div>
<div class="t" style="left:1621.29px;top:588.00px;width:194.55px;text-align:center;font-size:16px;color:#222">0</div>
<div class="a" style="left:1830.84px;top:595.00px;width:12px;height:2px;background:#333"></div>
<div class="a" style="left:1835.84px;top:590.00px;width:2px;height:12px;background:#333"></div>
<div class="t" style="left:1889.72px;top:545.70px;font-size:16px;color:#333">SSL时间</div>
<div class="box" style="left:1889.72px;top:576.00px;width:359.05px;height:40px"></div>
<div class="vl" style="left:1971.06px;top:576.00px;height:40px"></div>
<div class="vl" style="left:2012.06px;top:576.00px;height:40px"></div>
<div class="vl" style="left:2207.27px;top:576.00px;height:40px"></div>
<div class="t" style="left:1904.72px;top:588.10px;font-size:16px;color:#222">大于</div>
<svg style="position:absolute;left:1944.72px;top:591.5px" width="12.5" height="9" viewBox="0 0 12.5 9"><path d="M1 1 L6.25 6 L11.5 1" fill="none" stroke="#222" stroke-width="1.9"/></svg>
<div class="a" style="left:1986.22px;top:595.00px;width:11px;height:2px;background:#333"></div>
<div class="t" style="left:2012.72px;top:588.00px;width:194.55px;text-align:center;font-size:16px;color:#222">0</div>
<div class="a" style="left:2222.27px;top:595.00px;width:12px;height:2px;background:#333"></div>
<div class="a" style="left:2227.27px;top:590.00px;width:2px;height:12px;background:#333"></div>
<div class="t" style="left:2281.15px;top:545.70px;font-size:16px;color:#333">发送时间</div>
<div class="box" style="left:2281.15px;top:576.00px;width:359.05px;height:40px"></div>
<div class="vl" style="left:2362.49px;top:576.00px;height:40px"></div>
<div class="vl" style="left:2403.49px;top:576.00px;height:40px"></div>
<div class="vl" style="left:2598.70px;top:576.00px;height:40px"></div>
<div class="t" style="left:2296.15px;top:588.10px;font-size:16px;color:#222">大于</div>
<svg style="position:absolute;left:2336.15px;top:591.5px" width="12.5" height="9" viewBox="0 0 12.5 9"><path d="M1 1 L6.25 6 L11.5 1" fill="none" stroke="#222" stroke-width="1.9"/></svg>
<div class="a" style="left:2377.65px;top:595.00px;width:11px;height:2px;background:#333"></div>
<div class="t" style="left:2404.15px;top:588.00px;width:194.55px;text-align:center;font-size:16px;color:#222">0</div>
<div class="a" style="left:2613.70px;top:595.00px;width:12px;height:2px;background:#333"></div>
<div class="a" style="left:2618.70px;top:590.00px;width:2px;height:12px;background:#333"></div>
<div class="t" style="left:2672.58px;top:545.70px;font-size:16px;color:#333">等待时间</div>
<div class="box" style="left:2672.58px;top:576.00px;width:359.05px;height:40px"></div>
<div class="vl" style="left:2753.92px;top:576.00px;height:40px"></div>
<div class="vl" style="left:2794.92px;top:576.00px;height:40px"></div>
<div class="vl" style="left:2990.13px;top:576.00px;height:40px"></div>
<div class="t" style="left:2687.58px;top:588.10px;font-size:16px;color:#222">大于</div>
<svg style="position:absolute;left:2727.58px;top:591.5px" width="12.5" height="9" viewBox="0 0 12.5 9"><path d="M1 1 L6.25 6 L11.5 1" fill="none" stroke="#222" stroke-width="1.9"/></svg>
<div class="a" style="left:2769.08px;top:595.00px;width:11px;height:2px;background:#333"></div>
<div class="t" style="left:2795.58px;top:588.00px;width:194.55px;text-align:center;font-size:16px;color:#222">0</div>
<div class="a" style="left:3005.13px;top:595.00px;width:12px;height:2px;background:#333"></div>
<div class="a" style="left:3010.13px;top:590.00px;width:2px;height:12px;background:#333"></div>
<div class="t" style="left:3064.01px;top:545.70px;font-size:16px;color:#333">接收时间</div>
<div class="box" style="left:3064.01px;top:576.00px;width:359.05px;height:40px"></div>
<div class="vl" style="left:3145.35px;top:576.00px;height:40px"></div>
<div class="vl" style="left:3186.35px;top:576.00px;height:40px"></div>
<div class="vl" style="left:3381.56px;top:576.00px;height:40px"></div>
<div class="t" style="left:3079.01px;top:588.10px;font-size:16px;color:#222">大于</div>
<svg style="position:absolute;left:3119.01px;top:591.5px" width="12.5" height="9" viewBox="0 0 12.5 9"><path d="M1 1 L6.25 6 L11.5 1" fill="none" stroke="#222" stroke-width="1.9"/></svg>
<div class="a" style="left:3160.51px;top:595.00px;width:11px;height:2px;background:#333"></div>
<div class="t" style="left:3187.01px;top:588.00px;width:194.55px;text-align:center;font-size:16px;color:#222">0</div>
<div class="a" style="left:3396.56px;top:595.00px;width:12px;height:2px;background:#333"></div>
<div class="a" style="left:3401.56px;top:590.00px;width:2px;height:12px;background:#333"></div>
<div class="t" style="left:324.00px;top:651.30px;font-size:16px;color:#333">请求字节数</div>
<div class="box" style="left:324.00px;top:682.00px;width:359.05px;height:40px"></div>
<div class="vl" style="left:405.34px;top:682.00px;height:40px"></div>
<div class="vl" style="left:446.34px;top:682.00px;height:40px"></div>
<div class="vl" style="left:641.55px;top:682.00px;height:40px"></div>
<div class="t" style="left:339.00px;top:693.70px;font-size:16px;color:#222">大于</div>
<svg style="position:absolute;left:379.0px;top:697.5px" width="12.5" height="9" viewBox="0 0 12.5 9"><path d="M1 1 L6.25 6 L11.5 1" fill="none" stroke="#222" stroke-width="1.9"/></svg>
<div class="a" style="left:420.50px;top:701.00px;width:11px;height:2px;background:#333"></div>
<div class="t" style="left:447.00px;top:694.00px;width:194.55px;text-align:center;font-size:16px;color:#222">0</div>
<div class="a" style="left:656.55px;top:701.00px;width:12px;height:2px;background:#333"></div>
<div class="a" style="left:661.55px;top:696.00px;width:2px;height:12px;background:#333"></div>
<div class="t" style="left:715.43px;top:651.30px;font-size:16px;color:#333">接收字节数</div>
<div class="box" style="left:715.43px;top:682.00px;width:359.05px;height:40px"></div>
<div class="vl" style="left:796.77px;top:682.00px;height:40px"></div>
<div class="vl" style="left:837.77px;top:682.00px;height:40px"></div>
<div class="vl" style="left:1032.98px;top:682.00px;height:40px"></div>
<div class="t" style="left:730.43px;top:693.70px;font-size:16px;color:#222">大于</div>
<svg style="position:absolute;left:770.4300000000001px;top:697.5px" width="12.5" height="9" viewBox="0 0 12.5 9"><path d="M1 1 L6.25 6 L11.5 1" fill="none" stroke="#222" stroke-width="1.9"/></svg>
<div class="a" style="left:811.93px;top:701.00px;width:11px;height:2px;background:#333"></div>
<div class="t" style="left:838.43px;top:694.00px;width:194.55px;text-align:center;font-size:16px;color:#222">0</div>
<div class="a" style="left:1047.98px;top:701.00px;width:12px;height:2px;background:#333"></div>
<div class="a" style="left:1052.98px;top:696.00px;width:2px;height:12px;background:#333"></div>
<div class="t" style="left:1106.86px;top:651.30px;font-size:16px;color:#333">异常类型</div>
<div class="box" style="left:1106.86px;top:682.00px;width:359.00px;height:40px"></div>
<div class="vl" style="left:1188.20px;top:682.00px;height:40px"></div>
<div class="t" style="left:1121.86px;top:693.70px;font-size:16px;color:#222">匹配</div>
<svg style="position:absolute;left:1161.8600000000001px;top:697.5px" width="12.5" height="9" viewBox="0 0 12.5 9"><path d="M1 1 L6.25 6 L11.5 1" fill="none" stroke="#222" stroke-width="1.9"/></svg>
<div class="t" style="left:1194.86px;top:693.70px;font-size:16px;color:#999">请选择</div>
<div class="t" style="left:1498.29px;top:651.30px;font-size:16px;color:#333">异常信息</div>
<div class="box" style="left:1498.29px;top:682.00px;width:359.00px;height:40px"></div>
<div class="vl" style="left:1579.63px;top:682.00px;height:40px"></div>
<div class="t" style="left:1513.29px;top:693.70px;font-size:16px;color:#222">匹配</div>
<svg style="position:absolute;left:1553.29px;top:697.5px" width="12.5" height="9" viewBox="0 0 12.5 9"><path d="M1 1 L6.25 6 L11.5 1" fill="none" stroke="#222" stroke-width="1.9"/></svg>
<div class="t" style="left:1586.29px;top:693.70px;font-size:16px;color:#999">请选择</div>
<div class="a" style="left:3675px;top:742px;width:88px;height:40px;background:#0052d9"></div>
<div class="t" style="left:3675px;top:754px;width:88px;text-align:center;font-size:16px;color:#fff">查询</div>
<div class="a" style="left:297px;top:836px;width:3493px;height:575px;background:#fff;box-shadow:0 2px 3px rgba(54,58,80,0.08)"></div>
<div class="t" style="left:340px;top:872.5px;font-size:21.4px;font-weight:bold;color:#000">趋势分析</div>
<div class="box" style="left:3477.00px;top:940.40px;width:269.50px;height:41px"></div>
<div class="t" style="left:3492.00px;top:952.20px;font-size:16px;color:#222">发生次数</div>
<svg style="position:absolute;left:3718.0px;top:955.9px" width="12.5" height="9" viewBox="0 0 12.5 9"><path d="M1 1 L6.25 6 L11.5 1" fill="none" stroke="#222" stroke-width="1.9"/></svg>
<svg class="a" style="left:0;top:0" width="3840" height="1907" viewBox="0 0 3840 1907"><line x1="392.5" y1="1270.80" x2="3706" y2="1270.80" stroke="#e2e6f0" stroke-width="1.5"/><line x1="392.5" y1="1229.88" x2="3706" y2="1229.88" stroke="#e2e6f0" stroke-width="1.5"/><line x1="392.5" y1="1188.96" x2="3706" y2="1188.96" stroke="#e2e6f0" stroke-width="1.5"/><line x1="392.5" y1="1148.04" x2="3706" y2="1148.04" stroke="#e2e6f0" stroke-width="1.5"/><line x1="392.5" y1="1107.12" x2="3706" y2="1107.12" stroke="#e2e6f0" stroke-width="1.5"/><line x1="392.5" y1="1066.20" x2="3706" y2="1066.20" stroke="#e2e6f0" stroke-width="1.5"/><line x1="392.5" y1="1025.28" x2="3706" y2="1025.28" stroke="#e2e6f0" stroke-width="1.5"/></svg>
<div class="t" style="left:300px;top:1261.30px;width:82px;text-align:right;font-size:17px;color:#8592a8">0</div>
<div class="t" style="left:300px;top:1220.38px;width:82px;text-align:right;font-size:17px;color:#8592a8">100</div>
<div class="t" style="left:300px;top:1179.46px;width:82px;text-align:right;font-size:17px;color:#8592a8">200</div>
<div class="t" style="left:300px;top:1138.54px;width:82px;text-align:right;font-size:17px;color:#8592a8">300</div>
<div class="t" style="left:300px;top:1097.62px;width:82px;text-align:right;font-size:17px;color:#8592a8">400</div>
<div class="t" style="left:300px;top:1056.70px;width:82px;text-align:right;font-size:17px;color:#8592a8">500</div>
<div class="t" style="left:300px;top:1015.78px;width:82px;text-align:right;font-size:17px;color:#8592a8">600</div>
<svg class="a" style="left:0;top:0" width="3840" height="1907" viewBox="0 0 3840 1907"><polyline fill="none" stroke="#0052d9" stroke-width="3.2" stroke-linejoin="round" points="421.06,1270.80 478.19,1270.80 535.32,1270.80 592.45,1270.80 649.58,1270.80 706.71,1270.80 763.84,1270.80 820.97,1270.80 878.10,1270.80 935.23,1270.80 992.36,1270.80 1049.49,1270.80 1106.62,1262.62 1163.75,1270.80 1220.88,1270.80 1278.00,1142.72 1335.13,1270.80 1392.26,1058.02 1449.39,1270.80 1506.52,1270.80 1563.65,1270.80 1620.78,1270.80 1677.91,1270.80 1735.04,1238.47 1792.17,1255.25 1849.30,1270.80 1906.43,1218.01 1963.56,1270.80 2020.69,1270.80 2077.81,1270.80 2134.94,1270.80 2192.07,1270.80 2249.20,1270.80 2306.33,1270.80 2363.46,1270.80 2420.59,1270.80 2477.72,1270.80 2534.85,1270.80 2591.98,1270.80 2649.11,1270.80 2706.24,1270.80 2763.37,1270.80 2820.50,1270.80 2877.62,1270.80 2934.75,1270.80 2991.88,1270.80 3049.01,1270.80 3106.14,1270.80 3163.27,1270.80 3220.40,1270.80 3277.53,1270.80 3334.66,1270.80 3391.79,1270.80 3448.92,1270.80 3506.05,1270.80 3563.18,1270.80 3620.31,1270.80 3677.44,1270.80"/><circle cx="421.06" cy="1270.80" r="3.8" fill="#0052d9"/><circle cx="478.19" cy="1270.80" r="3.8" fill="#0052d9"/><circle cx="535.32" cy="1270.80" r="3.8" fill="#0052d9"/><circle cx="592.45" cy="1270.80" r="3.8" fill="#0052d9"/><circle cx="649.58" cy="1270.80" r="3.8" fill="#0052d9"/><circle cx="706.71" cy="1270.80" r="3.8" fill="#0052d9"/><circle cx="763.84" cy="1270.80" r="3.8" fill="#0052d9"/><circle cx="820.97" cy="1270.80" r="3.8" fill="#0052d9"/><circle cx="878.10" cy="1270.80" r="3.8" fill="#0052d9"/><circle cx="935.23" cy="1270.80" r="3.8" fill="#0052d9"/><circle cx="992.36" cy="1270.80" r="3.8" fill="#0052d9"/><circle cx="1049.49" cy="1270.80" r="3.8" fill="#0052d9"/><circle cx="1106.62" cy="1262.62" r="3.8" fill="#0052d9"/><circle cx="1163.75" cy="1270.80" r="3.8" fill="#0052d9"/><circle cx="1220.88" cy="1270.80" r="3.8" fill="#0052d9"/><circle cx="1278.00" cy="1142.72" r="3.8" fill="#0052d9"/><circle cx="1335.13" cy="1270.80" r="3.8" fill="#0052d9"/><circle cx="1392.26" cy="1058.02" r="3.8" fill="#0052d9"/><circle cx="1449.39" cy="1270.80" r="3.8" fill="#0052d9"/><circle cx="1506.52" cy="1270.80" r="3.8" fill="#0052d9"/><circle cx="1563.65" cy="1270.80" r="3.8" fill="#0052d9"/><circle cx="1620.78" cy="1270.80" r="3.8" fill="#0052d9"/><circle cx="1677.91" cy="1270.80" r="3.8" fill="#0052d9"/><circle cx="1735.04" cy="1238.47" r="3.8" fill="#0052d9"/><circle cx="1792.17" cy="1255.25" r="3.8" fill="#0052d9"/><circle cx="1849.30" cy="1270.80" r="3.8" fill="#0052d9"/><circle cx="1906.43" cy="1218.01" r="3.8" fill="#0052d9"/><circle cx="1963.56" cy="1270.80" r="3.8" fill="#0052d9"/><circle cx="2020.69" cy="1270.80" r="3.8" fill="#0052d9"/><circle cx="2077.81" cy="1270.80" r="3.8" fill="#0052d9"/><circle cx="2134.94" cy="1270.80" r="3.8" fill="#0052d9"/><circle cx="2192.07" cy="1270.80" r="3.8" fill="#0052d9"/><circle cx="2249.20" cy="1270.80" r="3.8" fill="#0052d9"/><circle cx="2306.33" cy="1270.80" r="3.8" fill="#0052d9"/><circle cx="2363.46" cy="1270.80" r="3.8" fill="#0052d9"/><circle cx="2420.59" cy="1270.80" r="3.8" fill="#0052d9"/><circle cx="2477.72" cy="1270.80" r="3.8" fill="#0052d9"/><circle cx="2534.85" cy="1270.80" r="3.8" fill="#0052d9"/><circle cx="2591.98" cy="1270.80" r="3.8" fill="#0052d9"/><circle cx="2649.11" cy="1270.80" r="3.8" fill="#0052d9"/><circle cx="2706.24" cy="1270.80" r="3.8" fill="#0052d9"/><circle cx="2763.37" cy="1270.80" r="3.8" fill="#0052d9"/><circle cx="2820.50" cy="1270.80" r="3.8" fill="#0052d9"/><circle cx="2877.62" cy="1270.80" r="3.8" fill="#0052d9"/><circle cx="2934.75" cy="1270.80" r="3.8" fill="#0052d9"/><circle cx="2991.88" cy="1270.80" r="3.8" fill="#0052d9"/><circle cx="3049.01" cy="1270.80" r="3.8" fill="#0052d9"/><circle cx="3106.14" cy="1270.80" r="3.8" fill="#0052d9"/><circle cx="3163.27" cy="1270.80" r="3.8" fill="#0052d9"/><circle cx="3220.40" cy="1270.80" r="3.8" fill="#0052d9"/><circle cx="3277.53" cy="1270.80" r="3.8" fill="#0052d9"/><circle cx="3334.66" cy="1270.80" r="3.8" fill="#0052d9"/><circle cx="3391.79" cy="1270.80" r="3.8" fill="#0052d9"/><circle cx="3448.92" cy="1270.80" r="3.8" fill="#0052d9"/><circle cx="3506.05" cy="1270.80" r="3.8" fill="#0052d9"/><circle cx="3563.18" cy="1270.80" r="3.8" fill="#0052d9"/><circle cx="3620.31" cy="1270.80" r="3.8" fill="#0052d9"/><circle cx="3677.44" cy="1270.80" r="3.8" fill="#0052d9"/></svg>
<div class="t" style="left:401.06px;top:1281.00px;width:40px;text-align:center;font-size:16px;color:#555">00</div>
<div class="t" style="left:458.19px;top:1281.00px;width:40px;text-align:center;font-size:16px;color:#555">01</div>
<div class="t" style="left:515.32px;top:1281.00px;width:40px;text-align:center;font-size:16px;color:#555">02</div>
<div class="t" style="left:572.45px;top:1281.00px;width:40px;text-align:center;font-size:16px;color:#555">03</div>
<div class="t" style="left:629.58px;top:1281.00px;width:40px;text-align:center;font-size:16px;color:#555">04</div>
<div class="t" style="left:686.71px;top:1281.00px;width:40px;text-align:center;font-size:16px;color:#555">05</div>
<div class="t" style="left:743.84px;top:1281.00px;width:40px;text-align:center;font-size:16px;color:#555">06</div>
<div class="t" style="left:800.97px;top:1281.00px;width:40px;text-align:center;font-size:16px;color:#555">07</div>
<div class="t" style="left:858.10px;top:1281.00px;width:40px;text-align:center;font-size:16px;color:#555">08</div>
<div class="t" style="left:915.23px;top:1281.00px;width:40px;text-align:center;font-size:16px;color:#555">09</div>
<div class="t" style="left:972.36px;top:1281.00px;width:40px;text-align:center;font-size:16px;color:#555">10</div>
<div class="t" style="left:1029.49px;top:1281.00px;width:40px;text-align:center;font-size:16px;color:#555">11</div>
<div class="t" style="left:1086.62px;top:1281.00px;width:40px;text-align:center;font-size:16px;color:#555">12</div>
<div class="t" style="left:1143.75px;top:1281.00px;width:40px;text-align:center;font-size:16px;color:#555">13</div>
<div class="t" style="left:1200.88px;top:1281.00px;width:40px;text-align:center;font-size:16px;color:#555">14</div>
<div class="t" style="left:1258.00px;top:1281.00px;width:40px;text-align:center;font-size:16px;color:#555">15</div>
<div class="t" style="left:1315.13px;top:1281.00px;width:40px;text-align:center;font-size:16px;color:#555">16</div>
<div class="t" style="left:1372.26px;top:1281.00px;width:40px;text-align:center;font-size:16px;color:#555">17</div>
<div class="t" style="left:1429.39px;top:1281.00px;width:40px;text-align:center;font-size:16px;color:#555">18</div>
<div class="t" style="left:1486.52px;top:1281.00px;width:40px;text-align:center;font-size:16px;color:#555">19</div>
<div class="t" style="left:1543.65px;top:1281.00px;width:40px;text-align:center;font-size:16px;color:#555">20</div>
<div class="t" style="left:1600.78px;top:1281.00px;width:40px;text-align:center;font-size:16px;color:#555">21</div>
<div class="t" style="left:1657.91px;top:1281.00px;width:40px;text-align:center;font-size:16px;color:#555">22</div>
<div class="t" style="left:1715.04px;top:1281.00px;width:40px;text-align:center;font-size:16px;color:#555">23</div>
<div class="t" style="left:1772.17px;top:1281.00px;width:40px;text-align:center;font-size:16px;color:#555">00</div>
<div class="t" style="left:1829.30px;top:1281.00px;width:40px;text-align:center;font-size:16px;color:#555">01</div>
<div class="t" style="left:1886.43px;top:1281.00px;width:40px;text-align:center;font-size:16px;color:#555">02</div>
<div class="t" style="left:1943.56px;top:1281.00px;width:40px;text-align:center;font-size:16px;color:#555">03</div>
<div class="t" style="left:2000.69px;top:1281.00px;width:40px;text-align:center;font-size:16px;color:#555">04</div>
<div class="t" style="left:2057.81px;top:1281.00px;width:40px;text-align:center;font-size:16px;color:#555">05</div>
<div class="t" style="left:2114.94px;top:1281.00px;width:40px;text-align:center;font-size:16px;color:#555">06</div>
<div class="t" style="left:2172.07px;top:1281.00px;width:40px;text-align:center;font-size:16px;color:#555">07</div>
<div class="t" style="left:2229.20px;top:1281.00px;width:40px;text-align:center;font-size:16px;color:#555">08</div>
<div class="t" style="left:2286.33px;top:1281.00px;width:40px;text-align:center;font-size:16px;color:#555">09</div>
<div class="t" style="left:2343.46px;top:1281.00px;width:40px;text-align:center;font-size:16px;color:#555">10</div>
<div class="t" style="left:2400.59px;top:1281.00px;width:40px;text-align:center;font-size:16px;color:#555">11</div>
<div class="t" style="left:2457.72px;top:1281.00px;width:40px;text-align:center;font-size:16px;color:#555">12</div>
<div class="t" style="left:2514.85px;top:1281.00px;width:40px;text-align:center;font-size:16px;color:#555">13</div>
<div class="t" style="left:2571.98px;top:1281.00px;width:40px;text-align:center;font-size:16px;color:#555">14</div>
<div class="t" style="left:2629.11px;top:1281.00px;width:40px;text-align:center;font-size:16px;color:#555">15</div>
<div class="t" style="left:2686.24px;top:1281.00px;width:40px;text-align:center;font-size:16px;color:#555">16</div>
<div class="t" style="left:2743.37px;top:1281.00px;width:40px;text-align:center;font-size:16px;color:#555">17</div>
<div class="t" style="left:2800.50px;top:1281.00px;width:40px;text-align:center;font-size:16px;color:#555">18</div>
<div class="t" style="left:2857.62px;top:1281.00px;width:40px;text-align:center;font-size:16px;color:#555">19</div>
<div class="t" style="left:2914.75px;top:1281.00px;width:40px;text-align:center;font-size:16px;color:#555">20</div>
<div class="t" style="left:2971.88px;top:1281.00px;width:40px;text-align:center;font-size:16px;color:#555">21</div>
<div class="t" style="left:3029.01px;top:1281.00px;width:40px;text-align:center;font-size:16px;color:#555">22</div>
<div class="t" style="left:3086.14px;top:1281.00px;width:40px;text-align:center;font-size:16px;color:#555">23</div>
<div class="t" style="left:3143.27px;top:1281.00px;width:40px;text-align:center;font-size:16px;color:#555">00</div>
<div class="t" style="left:3200.40px;top:1281.00px;width:40px;text-align:center;font-size:16px;color:#555">01</div>
<div class="t" style="left:3257.53px;top:1281.00px;width:40px;text-align:center;font-size:16px;color:#555">02</div>
<div class="t" style="left:3314.66px;top:1281.00px;width:40px;text-align:center;font-size:16px;color:#555">03</div>
<div class="t" style="left:3371.79px;top:1281.00px;width:40px;text-align:center;font-size:16px;color:#555">04</div>
<div class="t" style="left:3428.92px;top:1281.00px;width:40px;text-align:center;font-size:16px;color:#555">05</div>
<div class="t" style="left:3486.05px;top:1281.00px;width:40px;text-align:center;font-size:16px;color:#555">06</div>
<div class="t" style="left:3543.18px;top:1281.00px;width:40px;text-align:center;font-size:16px;color:#555">07</div>
<div class="t" style="left:3600.31px;top:1281.00px;width:40px;text-align:center;font-size:16px;color:#555">08</div>
<div class="t" style="left:3657.44px;top:1281.00px;width:40px;text-align:center;font-size:16px;color:#555">09</div>
<div class="a" style="left:297px;top:1438px;width:3493px;height:469px;background:#fff;box-shadow:0 2px 3px rgba(54,58,80,0.08)"></div>
<div class="a" style="left:459.4px;top:1438px;width:1.33px;height:59px;background:#e3e5ec"></div>
<div class="a" style="left:622px;top:1438px;width:1.33px;height:59px;background:#e3e5ec"></div>
<div class="a" style="left:459.4px;top:1496.5px;width:3330px;height:1.33px;background:#e3e5ec"></div>
<div class="t" style="left:340.6px;top:1457.5px;font-size:18.67px;font-weight:bold;color:#000">域名列表</div>
<div class="t" style="left:503px;top:1457.5px;font-size:18.67px;color:#555">统计分布</div>
<div class="a" style="left:3629px;top:1518px;width:123px;height:40px;background:#0052d9"></div>
<svg class="a" style="left:3657px;top:1529px" width="22" height="22" viewBox="0 0 22 22"><path d="M7.40 4.76 L8.66 4.19 L8.84 1.65 L13.16 1.65 L13.34 4.19 L14.60 4.76 L15.72 5.57 L18.02 4.45 L20.18 8.19 L18.07 9.63 L18.20 11.00 L18.07 12.37 L20.18 13.81 L18.02 17.55 L15.72 16.43 L14.60 17.24 L13.34 17.81 L13.16 20.35 L8.84 20.35 L8.66 17.81 L7.40 17.24 L6.28 16.43 L3.98 17.55 L1.82 13.81 L3.93 12.37 L3.80 11.00 L3.93 9.63 L1.82 8.19 L3.98 4.45 L6.28 5.57 Z" fill="none" stroke="#fff" stroke-width="1.8" stroke-linejoin="round"/><circle cx="11" cy="11" r="3.3" fill="none" stroke="#fff" stroke-width="1.9"/></svg>
<div class="t" style="left:3692px;top:1530px;font-size:16px;color:#fff">设置</div>
<div class="a" style="left:329px;top:1580px;width:3429px;height:62.7px;background:#f4f5f9;border-radius:4px 4px 0 0"></div>
<div class="t" style="left:340.50px;top:1601.00px;font-size:18.67px;color:#4f5866">域名</div>
<div class="t" style="left:700.70px;top:1601.00px;font-size:18.67px;color:#4f5866">最近发生时间</div>
<div class="a" style="left:689.20px;top:1596px;width:1.33px;height:30px;background:#dfe1e8"></div>
<svg class="a" style="left:1005.78px;top:1600px" width="12" height="22" viewBox="0 0 12 22"><path d="M1 9 L6 3 L11 9 Z M1 13 L6 19 L11 13 Z" fill="#bcbcbc"/></svg>
<div class="t" style="left:1041.58px;top:1601.00px;font-size:18.67px;color:#4f5866">上报量</div>
<div class="a" style="left:1030.08px;top:1596px;width:1.33px;height:30px;background:#dfe1e8"></div>
<svg class="a" style="left:1346.65px;top:1600px" width="12" height="22" viewBox="0 0 12 22"><path d="M1 9 L6 3 L11 9 Z M1 13 L6 19 L11 13 Z" fill="#bcbcbc"/></svg>
<div class="t" style="left:1382.45px;top:1601.00px;font-size:18.67px;color:#4f5866">慢请求次数(占比)</div>
<div class="a" style="left:1370.95px;top:1596px;width:1.33px;height:30px;background:#dfe1e8"></div>
<svg class="a" style="left:1687.53px;top:1600px" width="12" height="22" viewBox="0 0 12 22"><path d="M1 9 L6 3 L11 9 Z M1 13 L6 19 L11 13 Z" fill="#bcbcbc"/></svg>
<div class="t" style="left:1723.33px;top:1601.00px;font-size:18.67px;color:#4f5866">错误请求次数(占比)</div>
<div class="a" style="left:1711.83px;top:1596px;width:1.33px;height:30px;background:#dfe1e8"></div>
<svg class="a" style="left:2028.40px;top:1600px" width="12" height="22" viewBox="0 0 12 22"><path d="M1 9 L6 3 L11 9 Z M1 13 L6 19 L11 13 Z" fill="#bcbcbc"/></svg>
<div class="t" style="left:2064.20px;top:1601.00px;font-size:18.67px;color:#4f5866">请求时间P50</div>
<div class="a" style="left:2052.70px;top:1596px;width:1.33px;height:30px;background:#dfe1e8"></div>
<svg class="a" style="left:2369.27px;top:1600px" width="12" height="22" viewBox="0 0 12 22"><path d="M1 9 L6 3 L11 9 Z M1 13 L6 19 L11 13 Z" fill="#bcbcbc"/></svg>
<div class="t" style="left:2405.07px;top:1601.00px;font-size:18.67px;color:#4f5866">DNS时间P50</div>
<div class="a" style="left:2393.57px;top:1596px;width:1.33px;height:30px;background:#dfe1e8"></div>
<svg class="a" style="left:2710.15px;top:1600px" width="12" height="22" viewBox="0 0 12 22"><path d="M1 9 L6 3 L11 9 Z M1 13 L6 19 L11 13 Z" fill="#bcbcbc"/></svg>
<div class="t" style="left:2745.95px;top:1601.00px;font-size:18.67px;color:#4f5866">TCP时间P50</div>
<div class="a" style="left:2734.45px;top:1596px;width:1.33px;height:30px;background:#dfe1e8"></div>
<svg class="a" style="left:3051.02px;top:1600px" width="12" height="22" viewBox="0 0 12 22"><path d="M1 9 L6 3 L11 9 Z M1 13 L6 19 L11 13 Z" fill="#bcbcbc"/></svg>
<div class="t" style="left:3086.82px;top:1601.00px;font-size:18.67px;color:#4f5866">SSL时间P50</div>
<div class="a" style="left:3075.32px;top:1596px;width:1.33px;height:30px;background:#dfe1e8"></div>
<svg class="a" style="left:3391.90px;top:1600px" width="12" height="22" viewBox="0 0 12 22"><path d="M1 9 L6 3 L11 9 Z M1 13 L6 19 L11 13 Z" fill="#bcbcbc"/></svg>
<div class="t" style="left:3427.70px;top:1601.00px;font-size:18.67px;color:#4f5866">发送时间P50</div>
<div class="a" style="left:3416.20px;top:1596px;width:1.33px;height:30px;background:#dfe1e8"></div>
<svg class="a" style="left:3732.77px;top:1600px" width="12" height="22" viewBox="0 0 12 22"><path d="M1 9 L6 3 L11 9 Z M1 13 L6 19 L11 13 Z" fill="#bcbcbc"/></svg>
<div class="t" style="left:340.50px;top:1664.00px;font-size:18.9px;color:#0052d9">api.aida.qq.com</div>
<div class="t" style="left:700.70px;top:1664.00px;font-size:18.9px;color:#111">2025-07-22 02:49:52</div>
<div class="t" style="left:1041.58px;top:1664.00px;font-size:18.9px;color:#111">541</div>
<div class="t" style="left:1382.45px;top:1664.00px;font-size:18.9px;color:#111">0 &nbsp;(0%)</div>
<div class="t" style="left:1723.33px;top:1664.00px;font-size:18.9px;color:#111">1 &nbsp;(0.0911%)</div>
<div class="t" style="left:2064.20px;top:1664.00px;font-size:18.9px;color:#111">178.00ms</div>
<div class="t" style="left:2405.07px;top:1664.00px;font-size:18.9px;color:#111">0.00ms</div>
<div class="t" style="left:2745.95px;top:1664.00px;font-size:18.9px;color:#111">0.00ms</div>
<div class="t" style="left:3086.82px;top:1664.00px;font-size:18.9px;color:#111">0.00ms</div>
<div class="t" style="left:3427.70px;top:1664.00px;font-size:18.9px;color:#111">1.00ms</div>
<div class="a" style="left:329px;top:1705.00px;width:3429px;height:1.33px;background:#e7e8ed"></div>
<div class="t" style="left:340.50px;top:1727.00px;font-size:18.9px;color:#0052d9">api.yuanbao.tencent.com</div>
<div class="t" style="left:700.70px;top:1727.00px;font-size:18.9px;color:#111">2025-07-22 02:49:52</div>
<div class="t" style="left:1041.58px;top:1727.00px;font-size:18.9px;color:#111">522</div>
<div class="t" style="left:1382.45px;top:1727.00px;font-size:18.9px;color:#111">0 &nbsp;(0%)</div>
<div class="t" style="left:1723.33px;top:1727.00px;font-size:18.9px;color:#111">0 &nbsp;(0%)</div>
<div class="t" style="left:2064.20px;top:1727.00px;font-size:18.9px;color:#111">99.92ms</div>
<div class="t" style="left:2405.07px;top:1727.00px;font-size:18.9px;color:#111">0.00ms</div>
<div class="t" style="left:2745.95px;top:1727.00px;font-size:18.9px;color:#111">0.00ms</div>
<div class="t" style="left:3086.82px;top:1727.00px;font-size:18.9px;color:#111">0.00ms</div>
<div class="t" style="left:3427.70px;top:1727.00px;font-size:18.9px;color:#111">1.00ms</div>
<div class="a" style="left:329px;top:1768.00px;width:3429px;height:1.33px;background:#e7e8ed"></div>
<div class="t" style="left:340.50px;top:1790.00px;font-size:18.9px;color:#0052d9">yuanbao.tencent.com</div>
<div class="t" style="left:700.70px;top:1790.00px;font-size:18.9px;color:#111">2025-07-21 17:50:50</div>
<div class="t" style="left:1041.58px;top:1790.00px;font-size:18.9px;color:#111">34</div>
<div class="t" style="left:1382.45px;top:1790.00px;font-size:18.9px;color:#111">0 &nbsp;(0%)</div>
<div class="t" style="left:1723.33px;top:1790.00px;font-size:18.9px;color:#111">0 &nbsp;(0%)</div>
<div class="t" style="left:2064.20px;top:1790.00px;font-size:18.9px;color:#111">94.00ms</div>
<div class="t" style="left:2405.07px;top:1790.00px;font-size:18.9px;color:#111">0.00ms</div>
<div class="t" style="left:2745.95px;top:1790.00px;font-size:18.9px;color:#111">0.00ms</div>
<div class="t" style="left:3086.82px;top:1790.00px;font-size:18.9px;color:#111">0.00ms</div>
<div class="t" style="left:3427.70px;top:1790.00px;font-size:18.9px;color:#111">2.00ms</div>
<div class="a" style="left:329px;top:1831.00px;width:3429px;height:1.33px;background:#e7e8ed"></div>
<div class="a" style="left:329px;top:1642px;width:3429px;height:1.33px;background:#e7e8ed"></div>
<div class="t" style="left:3491.5px;top:1860px;font-size:18.67px;color:#222">第 1-3 条/总共 3 条</div>
<svg class="a" style="left:3672px;top:1861px" width="12" height="18" viewBox="0 0 12 18"><path d="M10 1.5 L2 9 L10 16.5" fill="none" stroke="#bbb" stroke-width="1.6"/></svg>
<div class="a" style="left:3693px;top:1854.5px;width:31.5px;height:31px;border:1.5px solid #1f7bff;border-radius:3px"></div>
<div class="t" style="left:3693px;top:1861px;width:31.5px;text-align:center;font-size:18.67px;color:#1f7bff">1</div>
<svg class="a" style="left:3736px;top:1861px" width="12" height="18" viewBox="0 0 12 18"><path d="M2 1.5 L10 9 L2 16.5" fill="none" stroke="#bbb" stroke-width="1.6"/></svg>
<div class="a" style="left:3754px;top:1478px;width:59px;height:84px;border-radius:30px;background:#0052d9;box-shadow:0 4px 16px rgba(0,0,0,0.12)"></div>
<svg class="a" style="left:3772px;top:1494px" width="23" height="23" viewBox="0 0 23 23"><path d="M3 13 V10 C3 5 6.8 1.5 11.5 1.5 C16.2 1.5 20 5 20 10 V13" fill="none" stroke="#fff" stroke-width="2.2"/><rect x="1.5" y="10" width="4" height="7" rx="1" fill="#fff"/><rect x="17.5" y="10" width="4" height="7" rx="1" fill="#fff"/><path d="M8.5 14 C9.5 16 13.5 16 14.5 14" fill="none" stroke="#fff" stroke-width="2"/><path d="M19.5 17 V19 C19.5 20 18.5 21 17 21 H12" fill="none" stroke="#fff" stroke-width="1.8"/></svg>
<div class="t" style="left:3754px;top:1526px;width:59px;text-align:center;font-size:16px;color:#fff">咨询</div>
<div class="a" style="left:3754px;top:1578.5px;width:59px;height:157px;border-radius:30px;background:#fff;box-shadow:0 4px 20px rgba(0,0,0,0.10)"></div>
<svg class="a" style="left:3772px;top:1594px" width="23" height="21" viewBox="0 0 23 21"><path d="M6 18.5 C3 18.5 1.5 16.3 1.5 14.3 C1.5 12 3.3 10.3 5.5 10.3 C6 6 8.6 3.3 12 3.3 M6 18.5 H17 C19.6 18.5 21.5 16.5 21.5 14 C21.5 12.5 20.8 11.3 19.8 10.5" fill="none" stroke="#000" stroke-width="2.2"/><circle cx="17.5" cy="5.5" r="3.8" fill="#000"/></svg>
<div class="t" style="left:3754px;top:1624px;width:59px;text-align:center;font-size:16px;color:#888">动态</div>
<div class="a" style="left:3773px;top:1655.5px;width:21px;height:1px;background:#e5e5e5"></div>
<svg class="a" style="left:3772px;top:1668px" width="23" height="21" viewBox="0 0 23 21"><path d="M1.5 2 H9 C10.3 2 11.5 3 11.5 4.5 C11.5 3 12.7 2 14 2 H21.5 V16 H14 C12.7 16 11.5 17 11.5 18.5 C11.5 17 10.3 16 9 16 H1.5 Z M11.5 4.5 V18.5" fill="none" stroke="#000" stroke-width="2.2"/><circle cx="6.5" cy="9" r="1.4" fill="#000"/><circle cx="16.5" cy="9" r="1.4" fill="#000"/></svg>
<div class="t" style="left:3754px;top:1699px;width:59px;text-align:center;font-size:16px;color:#888">文档</div>
<div class="a" style="left:3759.5px;top:1751.5px;width:48px;height:48px;border-radius:50%;background:#fff;box-shadow:0 4px 20px rgba(0,0,0,0.10)"></div>
<svg class="a" style="left:3777px;top:1767px" width="12" height="16" viewBox="0 0 12 16"><path d="M3 2 L9 8 L3 14" fill="none" stroke="#111" stroke-width="2.2"/></svg>
<div class="a" style="left:3817px;top:68px;width:23px;height:1839px;background:#fbfbfb"></div>
<div class="a" style="left:3822px;top:95px;width:13px;height:1718.5px;border-radius:6.5px;background:#8a8a8a"></div>
<svg class="a" style="left:3820px;top:74px" width="17" height="12" viewBox="0 0 17 12"><path d="M8.5 1.5 L15.5 10.5 H1.5 Z" fill="#8a8a8a" stroke="#8a8a8a" stroke-width="1.5" stroke-linejoin="round"/></svg>
<svg class="a" style="left:3820px;top:1891px" width="17" height="12" viewBox="0 0 17 12"><path d="M8.5 10.5 L15.5 1.5 H1.5 Z" fill="#8a8a8a" stroke="#8a8a8a" stroke-width="1.5" stroke-linejoin="round"/></svg>
<div class="a" style="left:272px;top:120px;width:241px;height:73px;border:4px solid #ea4335;border-radius:6px"></div>
<div class="a" style="left:17.5px;top:1268px;width:240px;height:74px;border:4px solid #ea4335;border-radius:6px"></div>
</body></html>
